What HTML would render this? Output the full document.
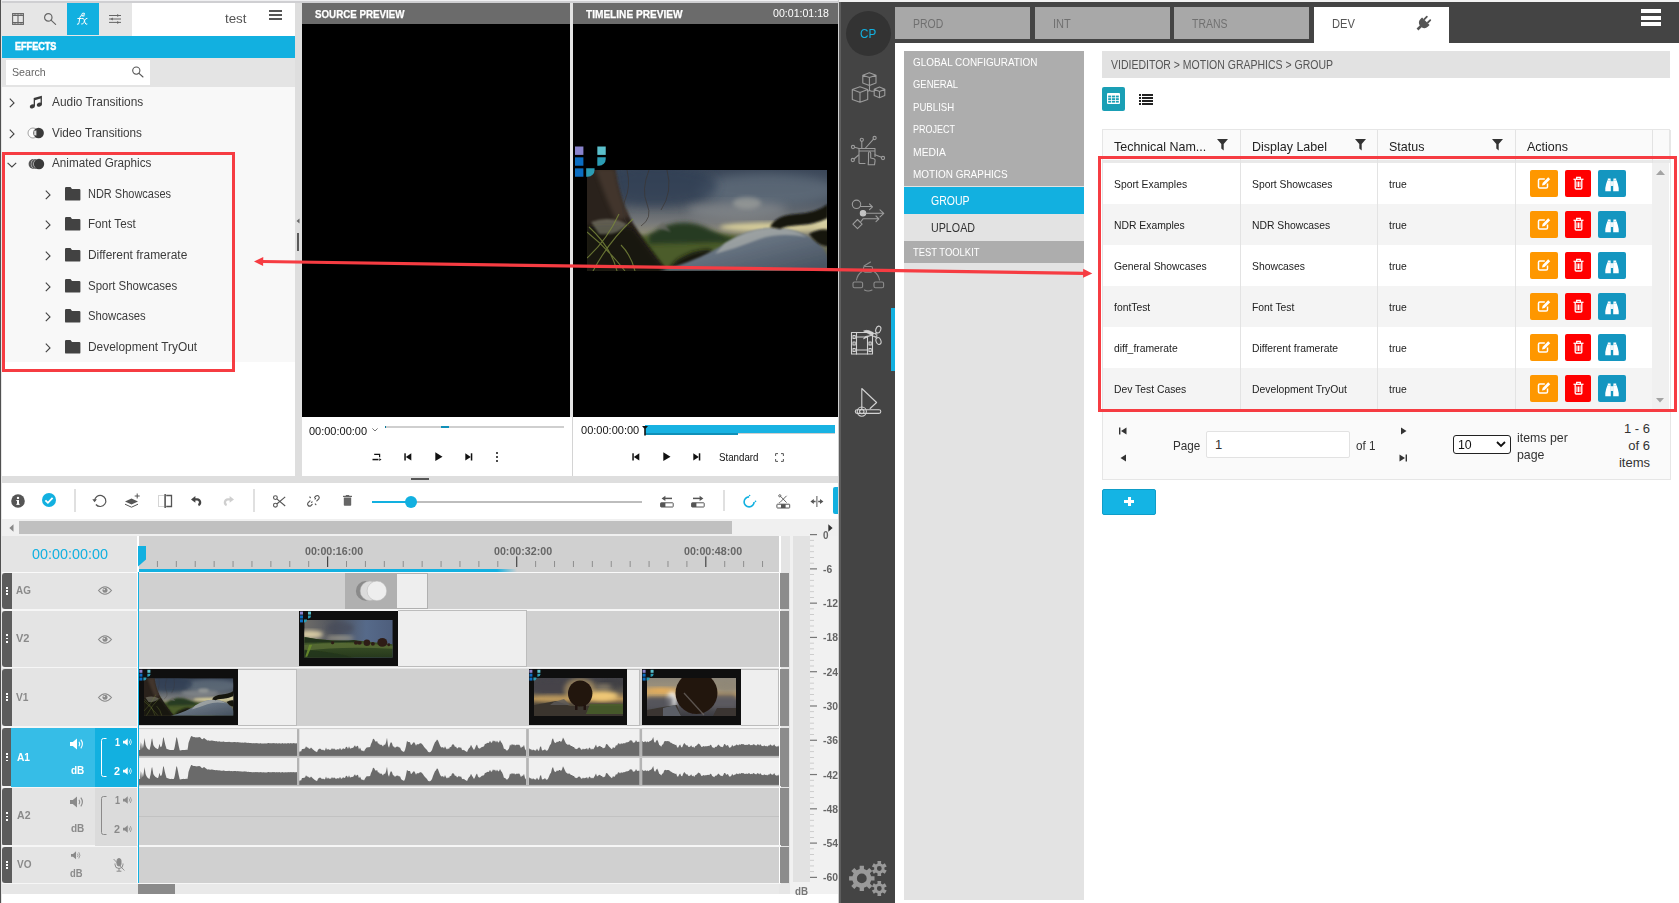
<!DOCTYPE html>
<html><head><meta charset="utf-8"><title>ui</title>
<style>
html,body{margin:0;padding:0;}
body{width:1679px;height:903px;overflow:hidden;background:#fff;position:relative;font-family:"Liberation Sans",sans-serif;}
body>div,body>svg{position:absolute;box-sizing:border-box;}
body>svg{overflow:visible;}
</style></head><body>
<div style="left:0px;top:0px;width:839px;height:476px;background:#dedede;"></div>
<div style="left:0px;top:0px;width:1.2px;height:903px;background:#505050;"></div>
<div style="left:1.2px;top:0px;width:0.8px;height:903px;background:#e6e6e6;"></div>
<div style="left:2px;top:0px;width:837px;height:3px;background:#cfcfd2;"></div>
<div style="left:2px;top:0px;width:837px;height:1.3px;background:#f0f0f2;"></div>
<div style="left:2px;top:3px;width:293px;height:473px;background:#ffffff;"></div>
<div style="left:2px;top:3px;width:130px;height:33px;background:#e6e6e6;"></div>
<div style="left:67px;top:3px;width:32px;height:32px;background:#12b0e0;"></div>
<div style="left:2px;top:36px;width:293px;height:22px;background:#12b0e0;"></div>
<div style="left:14.7px;top:36px;font-size:10px;color:#fff;line-height:22px;height:22px;white-space:nowrap;transform:scaleX(0.9087);transform-origin:0 0;font-weight:bold;-webkit-text-stroke:0.5px #fff;">EFFECTS</div>
<div style="left:2px;top:58px;width:293px;height:29px;background:#e4e4e4;"></div>
<div style="left:6px;top:60px;width:144px;height:25px;background:#fff;"></div>
<div style="left:12.2px;top:60px;font-size:10.5px;color:#666;line-height:25px;height:25px;white-space:nowrap;transform:scaleX(1.0159);transform-origin:0 0;">Search</div>
<div style="left:2px;top:87px;width:293px;height:275px;background:#f8f8f8;"></div>
<div style="left:225px;top:8px;font-size:13px;color:#555;line-height:22px;height:22px;white-space:nowrap;transform:scaleX(1.0261);transform-origin:0 0;">test</div>
<div style="left:269.2px;top:10.1px;width:12.8px;height:2.2px;background:#555;"></div>
<div style="left:269.2px;top:14px;width:12.8px;height:2.2px;background:#555;"></div>
<div style="left:269.2px;top:17.9px;width:12.8px;height:2.2px;background:#555;"></div>
<svg style="left:12px;top:13px;" width="12" height="12" viewBox="0 0 12 12"><g fill="none" stroke="#666" stroke-width="1.1"><rect x=".6" y=".6" width="10.8" height="10.8"/><path d="M.6 2.4h10.8M.6 9.600h10.8M6 2.400v7.200" /><path d="M3 .6v1.800M6 .6v1.800M9 .6v1.800M3 9.600v1.800M6 9.600v1.800M9 9.600v1.800" stroke-width=".8"/></g></svg>
<svg style="left:43px;top:12px;" width="14" height="14" viewBox="0 0 14 14"><g fill="none" stroke="#666" stroke-width="1.2"><circle cx="5.300" cy="5.400" r="3.700"/><path d="M8 8.100l4.600 4.300" stroke-linecap="round"/></g></svg>
<svg style="left:76px;top:12px;" width="14" height="14" viewBox="0 0 14 14"><g fill="none" stroke="#fff" stroke-width="1" stroke-linecap="round"><path d="M1.300 12.300q1.400.6 1.700-1.500l.8-5.200q.4-2.400 2.300-2.100"/><path d="M1.800 6.500h3.600"/><path d="M6.300 6.300q1.300-.5 1.900 1.600l.9 3q.6 2 1.900 1.300"/><path d="M11 6.300q-1.300-.2-2.200 1.800l-1.100 2.600q-.8 1.800-2.100 1.400"/><path d="M5.500 2.200q1.400-1.800 2.900-.9q.9.800-.5 1.600l-2 .4q.5 1.500 2.400.6"/></g></svg>
<svg style="left:109px;top:14px;" width="12" height="10" viewBox="0 0 12 10"><g stroke="#666" stroke-width="1" fill="#666"><path d="M0 1.500h12M0 5h12M0 8.400h12"/><path d="M8.200 0l2.300 1.500-2.300 1.500zM3.800 3.500L1.500 5l2.300 1.500zM8.200 6.900l2.300 1.500-2.300 1.500z" stroke="none"/></g></svg>
<svg style="left:131px;top:65px;" width="13" height="13" viewBox="0 0 13 13"><g fill="none" stroke="#555" stroke-width="1.100"><circle cx="5.300" cy="5.600" r="3.600"/><path d="M8 8.300l4 3.700" stroke-linecap="round"/></g></svg>
<div style="left:51.7px;top:93px;font-size:12.5px;color:#3c3c3c;line-height:18px;height:18px;white-space:nowrap;transform:scaleX(0.9511);transform-origin:0 0;">Audio Transitions</div>
<div style="left:51.7px;top:124px;font-size:12.5px;color:#3c3c3c;line-height:18px;height:18px;white-space:nowrap;transform:scaleX(0.9408);transform-origin:0 0;">Video Transitions</div>
<div style="left:51.7px;top:154px;font-size:12.5px;color:#3c3c3c;line-height:18px;height:18px;white-space:nowrap;transform:scaleX(0.9351);transform-origin:0 0;">Animated Graphics</div>
<div style="left:87.9px;top:185px;font-size:12.5px;color:#3c3c3c;line-height:18px;height:18px;white-space:nowrap;transform:scaleX(0.8785);transform-origin:0 0;">NDR Showcases</div>
<svg style="left:44.6px;top:189.5px;" width="6" height="10" viewBox="0 0 6 10"><path d="M.8 .6l4.200 4.300-4.200 4.300" fill="none" stroke="#444" stroke-width="1.150"/></svg>
<svg style="left:64.7px;top:187px;" width="16" height="14" viewBox="0 0 16 14"><path d="M0 1.200a1.200 1.200 0 0 1 1.200-1.200h4.300l1.500 1.900h7.200a1.200 1.200 0 0 1 1.200 1.200v9.300a1.200 1.200 0 0 1-1.200 1.200h-13a1.200 1.200 0 0 1-1.200-1.200z" fill="#424242"/></svg>
<div style="left:87.9px;top:215px;font-size:12.5px;color:#3c3c3c;line-height:18px;height:18px;white-space:nowrap;transform:scaleX(0.9319);transform-origin:0 0;">Font Test</div>
<svg style="left:44.6px;top:219.5px;" width="6" height="10" viewBox="0 0 6 10"><path d="M.8 .6l4.200 4.300-4.200 4.300" fill="none" stroke="#444" stroke-width="1.150"/></svg>
<svg style="left:64.7px;top:217px;" width="16" height="14" viewBox="0 0 16 14"><path d="M0 1.200a1.200 1.200 0 0 1 1.200-1.200h4.300l1.500 1.900h7.200a1.200 1.200 0 0 1 1.200 1.200v9.300a1.200 1.200 0 0 1-1.200 1.200h-13a1.200 1.200 0 0 1-1.200-1.200z" fill="#424242"/></svg>
<div style="left:87.9px;top:246px;font-size:12.5px;color:#3c3c3c;line-height:18px;height:18px;white-space:nowrap;transform:scaleX(0.9550);transform-origin:0 0;">Different framerate</div>
<svg style="left:44.6px;top:250.5px;" width="6" height="10" viewBox="0 0 6 10"><path d="M.8 .6l4.200 4.300-4.200 4.300" fill="none" stroke="#444" stroke-width="1.150"/></svg>
<svg style="left:64.7px;top:248px;" width="16" height="14" viewBox="0 0 16 14"><path d="M0 1.200a1.200 1.200 0 0 1 1.200-1.200h4.300l1.500 1.900h7.200a1.200 1.200 0 0 1 1.200 1.200v9.300a1.200 1.200 0 0 1-1.200 1.200h-13a1.200 1.200 0 0 1-1.200-1.200z" fill="#424242"/></svg>
<div style="left:87.9px;top:277px;font-size:12.5px;color:#3c3c3c;line-height:18px;height:18px;white-space:nowrap;transform:scaleX(0.9170);transform-origin:0 0;">Sport Showcases</div>
<svg style="left:44.6px;top:281.5px;" width="6" height="10" viewBox="0 0 6 10"><path d="M.8 .6l4.200 4.300-4.200 4.300" fill="none" stroke="#444" stroke-width="1.150"/></svg>
<svg style="left:64.7px;top:279px;" width="16" height="14" viewBox="0 0 16 14"><path d="M0 1.200a1.200 1.200 0 0 1 1.200-1.200h4.300l1.500 1.900h7.200a1.200 1.200 0 0 1 1.200 1.200v9.300a1.200 1.200 0 0 1-1.200 1.200h-13a1.200 1.200 0 0 1-1.200-1.200z" fill="#424242"/></svg>
<div style="left:87.9px;top:307px;font-size:12.5px;color:#3c3c3c;line-height:18px;height:18px;white-space:nowrap;transform:scaleX(0.9026);transform-origin:0 0;">Showcases</div>
<svg style="left:44.6px;top:311.5px;" width="6" height="10" viewBox="0 0 6 10"><path d="M.8 .6l4.200 4.300-4.200 4.300" fill="none" stroke="#444" stroke-width="1.150"/></svg>
<svg style="left:64.7px;top:309px;" width="16" height="14" viewBox="0 0 16 14"><path d="M0 1.200a1.200 1.200 0 0 1 1.200-1.200h4.300l1.500 1.900h7.200a1.200 1.200 0 0 1 1.200 1.200v9.300a1.200 1.200 0 0 1-1.200 1.200h-13a1.200 1.200 0 0 1-1.200-1.200z" fill="#424242"/></svg>
<div style="left:87.9px;top:338px;font-size:12.5px;color:#3c3c3c;line-height:18px;height:18px;white-space:nowrap;transform:scaleX(0.9517);transform-origin:0 0;">Development TryOut</div>
<svg style="left:44.6px;top:342.5px;" width="6" height="10" viewBox="0 0 6 10"><path d="M.8 .6l4.200 4.300-4.200 4.300" fill="none" stroke="#444" stroke-width="1.150"/></svg>
<svg style="left:64.7px;top:340px;" width="16" height="14" viewBox="0 0 16 14"><path d="M0 1.200a1.200 1.200 0 0 1 1.200-1.200h4.300l1.500 1.900h7.200a1.200 1.200 0 0 1 1.200 1.200v9.300a1.200 1.200 0 0 1-1.200 1.200h-13a1.200 1.200 0 0 1-1.200-1.200z" fill="#424242"/></svg>
<svg style="left:9.2px;top:98px;" width="6" height="10" viewBox="0 0 6 10"><path d="M.8 .6l4.200 4.300-4.200 4.300" fill="none" stroke="#444" stroke-width="1.150"/></svg>
<svg style="left:9.2px;top:129px;" width="6" height="10" viewBox="0 0 6 10"><path d="M.8 .6l4.200 4.300-4.200 4.300" fill="none" stroke="#444" stroke-width="1.150"/></svg>
<svg style="left:7.1px;top:162px;" width="10" height="6" viewBox="0 0 10 6"><path d="M.6 .8l4.300 4.200 4.300-4.200" fill="none" stroke="#444" stroke-width="1.150"/></svg>
<svg style="left:29px;top:95px;" width="14" height="14" viewBox="0 0 14 14"><g fill="#3a3a3a"><ellipse cx="3.300" cy="11.400" rx="2.600" ry="2" transform="rotate(-20 3.3 11.4)"/><ellipse cx="10.300" cy="9.600" rx="2.600" ry="2" transform="rotate(-20 10.3 9.6)"/><path d="M4.700 11.300V3l8.200-2.300v9h-1.300V3.600l-5.600 1.600v6.100z"/></g></svg>
<svg style="left:27px;top:127px;" width="18" height="12" viewBox="0 0 18 12"><circle cx="6" cy="6" r="5" fill="#fff" stroke="#999" stroke-width=".9"/><circle cx="11.600" cy="6" r="5.300" fill="#3a3a3a"/><rect x="7" y="3.600" width="2.400" height="4.800" fill="#ddd" stroke="#777" stroke-width=".5"/></svg>
<svg style="left:28px;top:158px;" width="17" height="12" viewBox="0 0 17 12"><circle cx="5.600" cy="6" r="5" fill="#555"/><circle cx="7.800" cy="6" r="5" fill="#f8f8f8"/><circle cx="8.200" cy="6" r="5" fill="#555"/><circle cx="10.400" cy="6" r="5" fill="#f8f8f8"/><circle cx="11" cy="6" r="5.200" fill="#3a3a3a"/></svg>
<div style="left:302px;top:3px;width:268px;height:21px;background:#6b6b6b;"></div>
<div style="left:314.5px;top:3.7px;font-size:10.5px;color:#fff;line-height:21px;height:21px;white-space:nowrap;transform:scaleX(0.9297);transform-origin:0 0;font-weight:bold;-webkit-text-stroke:0.25px #fff;">SOURCE PREVIEW</div>
<div style="left:302px;top:24px;width:268px;height:393px;background:#000;"></div>
<div style="left:302px;top:417px;width:268px;height:59px;background:#fff;"></div>
<div style="left:573px;top:3px;width:265px;height:21px;background:#6b6b6b;"></div>
<div style="left:585.5px;top:3.7px;font-size:10.5px;color:#fff;line-height:21px;height:21px;white-space:nowrap;transform:scaleX(0.9617);transform-origin:0 0;font-weight:bold;-webkit-text-stroke:0.25px #fff;">TIMELINE PREVIEW</div>
<div style="left:573px;top:24px;width:265px;height:393px;background:#000;"></div>
<div style="left:573px;top:417px;width:265px;height:59px;background:#fff;"></div>
<div style="left:772.5px;top:3px;font-size:11px;color:#fff;line-height:20px;height:20px;white-space:nowrap;transform:scaleX(0.9637);transform-origin:0 0;">00:01:01:18</div>
<div style="left:309.3px;top:422px;font-size:11.5px;color:#111;line-height:18px;height:18px;white-space:nowrap;transform:scaleX(0.9547);transform-origin:0 0;">00:00:00:00</div>
<div style="left:581px;top:421px;font-size:11.5px;color:#111;line-height:18px;height:18px;white-space:nowrap;transform:scaleX(0.9580);transform-origin:0 0;">00:00:00:00</div>
<div style="left:718.5px;top:450px;font-size:10px;color:#111;line-height:16px;height:16px;white-space:nowrap;transform:scaleX(0.9732);transform-origin:0 0;">Standard</div>
<div style="left:2px;top:476px;width:837px;height:7px;background:#dedede;"></div>
<div style="left:2px;top:483px;width:837px;height:36px;background:#fff;"></div>
<div style="left:2px;top:519px;width:837px;height:17px;background:#f0f0f0;"></div>
<div style="left:19px;top:521px;width:713px;height:13px;background:#c0c0c0;"></div>
<svg style="left:8.5px;top:523.5px;" width="5" height="8" viewBox="0 0 5 8"><path d="M4.500 .3v7.400L.3 4z" fill="#888"/></svg>
<svg style="left:828px;top:523.8px;" width="5" height="8" viewBox="0 0 5 8"><path d="M.3 .2v7.600l4.300-3.800z" fill="#333"/></svg>
<div style="left:2px;top:536px;width:837px;height:358px;background:#e4e4e4;"></div>
<div style="left:790px;top:536px;width:49px;height:358px;background:#f1f1f1;"></div>
<div style="left:137px;top:536px;width:2px;height:347px;background:#fff;"></div>
<div style="left:139px;top:536px;width:640px;height:36px;background:#d0d0d0;"></div>
<div style="left:779px;top:536px;width:2px;height:347px;background:#fff;"></div>
<div style="left:31.5px;top:543.5px;font-size:14.5px;color:#12b0e0;line-height:20px;height:20px;white-space:nowrap;transform:scaleX(0.9922);transform-origin:0 0;">00:00:00:00</div>
<svg style="left:0px;top:0px;" width="1679" height="903" viewBox="0 0 1679 903"><rect x="156.91" y="561" width="1" height="6" fill="#8e8e8e"/><rect x="175.82" y="561" width="1" height="6" fill="#8e8e8e"/><rect x="194.73" y="561" width="1" height="6" fill="#8e8e8e"/><rect x="213.64" y="561" width="1" height="6" fill="#8e8e8e"/><rect x="232.55" y="561" width="1" height="6" fill="#8e8e8e"/><rect x="251.46" y="561" width="1" height="6" fill="#8e8e8e"/><rect x="270.37" y="561" width="1" height="6" fill="#8e8e8e"/><rect x="289.28" y="561" width="1" height="6" fill="#8e8e8e"/><rect x="308.19" y="561" width="1" height="6" fill="#8e8e8e"/><rect x="327.00" y="556.4" width="1.2" height="10.6" fill="#444"/><rect x="346.01" y="561" width="1" height="6" fill="#8e8e8e"/><rect x="364.92" y="561" width="1" height="6" fill="#8e8e8e"/><rect x="383.83" y="561" width="1" height="6" fill="#8e8e8e"/><rect x="402.74" y="561" width="1" height="6" fill="#8e8e8e"/><rect x="421.65" y="561" width="1" height="6" fill="#8e8e8e"/><rect x="440.56" y="561" width="1" height="6" fill="#8e8e8e"/><rect x="459.47" y="561" width="1" height="6" fill="#8e8e8e"/><rect x="478.38" y="561" width="1" height="6" fill="#8e8e8e"/><rect x="497.29" y="561" width="1" height="6" fill="#8e8e8e"/><rect x="516.10" y="556.4" width="1.2" height="10.6" fill="#444"/><rect x="535.11" y="561" width="1" height="6" fill="#8e8e8e"/><rect x="554.02" y="561" width="1" height="6" fill="#8e8e8e"/><rect x="572.93" y="561" width="1" height="6" fill="#8e8e8e"/><rect x="591.84" y="561" width="1" height="6" fill="#8e8e8e"/><rect x="610.75" y="561" width="1" height="6" fill="#8e8e8e"/><rect x="629.66" y="561" width="1" height="6" fill="#8e8e8e"/><rect x="648.57" y="561" width="1" height="6" fill="#8e8e8e"/><rect x="667.48" y="561" width="1" height="6" fill="#8e8e8e"/><rect x="686.39" y="561" width="1" height="6" fill="#8e8e8e"/><rect x="705.20" y="556.4" width="1.2" height="10.6" fill="#444"/><rect x="724.21" y="561" width="1" height="6" fill="#8e8e8e"/><rect x="743.12" y="561" width="1" height="6" fill="#8e8e8e"/><rect x="762.03" y="561" width="1" height="6" fill="#8e8e8e"/></svg>
<div style="left:305.3px;top:543.5px;font-size:10.5px;color:#666;line-height:14px;height:14px;white-space:nowrap;transform:scaleX(1.0156);transform-origin:0 0;font-weight:bold;">00:00:16:00</div>
<div style="left:494.40000000000003px;top:543.5px;font-size:10.5px;color:#666;line-height:14px;height:14px;white-space:nowrap;transform:scaleX(1.0156);transform-origin:0 0;font-weight:bold;">00:00:32:00</div>
<div style="left:683.5px;top:543.5px;font-size:10.5px;color:#666;line-height:14px;height:14px;white-space:nowrap;transform:scaleX(1.0156);transform-origin:0 0;font-weight:bold;">00:00:48:00</div>
<div style="left:139px;top:568.9px;width:358px;height:3px;background:#12b0e0;"></div>
<div style="left:497px;top:568.9px;width:20px;height:3px;background:linear-gradient(90deg,#12b0e0,rgba(18,176,224,0));"></div>
<svg style="left:138px;top:546px;" width="9" height="21" viewBox="0 0 9 21"><path d="M0 0h8v13.500L0 20.500z" fill="#12b0e0"/></svg>
<div style="left:139px;top:573px;width:640px;height:36px;background:#d0d0d0;"></div>
<div style="left:2px;top:573px;width:9.5px;height:36px;background:#5c5c5c;border-radius:3px 0 0 3px;"></div>
<div style="left:780.3px;top:573px;width:8.6px;height:36px;background:#8c8c8c;"></div>
<div style="left:5.6px;top:586.9px;width:2px;height:1.8px;background:#fff;"></div>
<div style="left:5.6px;top:590.1px;width:2px;height:1.8px;background:#fff;"></div>
<div style="left:5.6px;top:593.3000000000001px;width:2px;height:1.8px;background:#fff;"></div>
<div style="left:139px;top:610.5px;width:640px;height:56px;background:#d0d0d0;"></div>
<div style="left:2px;top:610.5px;width:9.5px;height:56px;background:#5c5c5c;border-radius:3px 0 0 3px;"></div>
<div style="left:780.3px;top:610.5px;width:8.6px;height:56px;background:#8c8c8c;"></div>
<div style="left:5.6px;top:634.4px;width:2px;height:1.8px;background:#fff;"></div>
<div style="left:5.6px;top:637.6px;width:2px;height:1.8px;background:#fff;"></div>
<div style="left:5.6px;top:640.8000000000001px;width:2px;height:1.8px;background:#fff;"></div>
<div style="left:139px;top:668.5px;width:640px;height:57px;background:#d0d0d0;"></div>
<div style="left:2px;top:668.5px;width:9.5px;height:57px;background:#5c5c5c;border-radius:3px 0 0 3px;"></div>
<div style="left:780.3px;top:668.5px;width:8.6px;height:57px;background:#8c8c8c;"></div>
<div style="left:5.6px;top:692.9px;width:2px;height:1.8px;background:#fff;"></div>
<div style="left:5.6px;top:696.1px;width:2px;height:1.8px;background:#fff;"></div>
<div style="left:5.6px;top:699.3000000000001px;width:2px;height:1.8px;background:#fff;"></div>
<div style="left:139px;top:728px;width:640px;height:58.5px;background:#d0d0d0;"></div>
<div style="left:2px;top:728px;width:9.5px;height:58.5px;background:#5c5c5c;border-radius:3px 0 0 3px;"></div>
<div style="left:780.3px;top:728px;width:8.6px;height:58.5px;background:#8c8c8c;"></div>
<div style="left:5.6px;top:753.15px;width:2px;height:1.8px;background:#fff;"></div>
<div style="left:5.6px;top:756.35px;width:2px;height:1.8px;background:#fff;"></div>
<div style="left:5.6px;top:759.5500000000001px;width:2px;height:1.8px;background:#fff;"></div>
<div style="left:139px;top:787.5px;width:640px;height:58px;background:#d0d0d0;"></div>
<div style="left:2px;top:787.5px;width:9.5px;height:58px;background:#5c5c5c;border-radius:3px 0 0 3px;"></div>
<div style="left:780.3px;top:787.5px;width:8.6px;height:58px;background:#8c8c8c;"></div>
<div style="left:5.6px;top:812.4px;width:2px;height:1.8px;background:#fff;"></div>
<div style="left:5.6px;top:815.6px;width:2px;height:1.8px;background:#fff;"></div>
<div style="left:5.6px;top:818.8000000000001px;width:2px;height:1.8px;background:#fff;"></div>
<div style="left:139px;top:847px;width:640px;height:36px;background:#d0d0d0;"></div>
<div style="left:2px;top:847px;width:9.5px;height:36px;background:#5c5c5c;border-radius:3px 0 0 3px;"></div>
<div style="left:780.3px;top:847px;width:8.6px;height:36px;background:#8c8c8c;"></div>
<div style="left:5.6px;top:860.9px;width:2px;height:1.8px;background:#fff;"></div>
<div style="left:5.6px;top:864.1px;width:2px;height:1.8px;background:#fff;"></div>
<div style="left:5.6px;top:867.3000000000001px;width:2px;height:1.8px;background:#fff;"></div>
<div style="left:2px;top:609px;width:779px;height:1.5px;background:#f6f6f6;"></div>
<div style="left:2px;top:666.8px;width:779px;height:1.7px;background:#f6f6f6;"></div>
<div style="left:2px;top:725.7px;width:779px;height:2.3px;background:#f6f6f6;"></div>
<div style="left:2px;top:786.3px;width:779px;height:1.4px;background:#f6f6f6;"></div>
<div style="left:2px;top:845.4px;width:779px;height:1.8px;background:#f6f6f6;"></div>
<div style="left:2px;top:883px;width:779px;height:1px;background:#f6f6f6;"></div>
<div style="left:2px;top:571.9px;width:779px;height:1.4px;background:#fafafa;"></div>
<div style="left:138.3px;top:572px;width:1.2px;height:311px;background:#12b0e0;"></div>
<div style="left:16.2px;top:581px;font-size:11.5px;color:#8a8a8a;line-height:18px;height:18px;white-space:nowrap;transform:scaleX(0.8580);transform-origin:0 0;font-weight:bold;">AG</div>
<svg style="left:98.3px;top:586.3px;" width="14" height="9" viewBox="0 0 14 9"><path d="M.5 4.500q6.500-7.400 13 0q-6.500 7.400-13 0z" fill="none" stroke="#8a8a8a" stroke-width="1.100"/><circle cx="7" cy="4.300" r="2.500" fill="#8a8a8a"/><circle cx="6.200" cy="3.500" r=".8" fill="#e4e4e4"/></svg>
<div style="left:16.2px;top:629px;font-size:11.5px;color:#8a8a8a;line-height:18px;height:18px;white-space:nowrap;transform:scaleX(0.9597);transform-origin:0 0;font-weight:bold;">V2</div>
<svg style="left:98.3px;top:634.5px;" width="14" height="9" viewBox="0 0 14 9"><path d="M.5 4.500q6.500-7.400 13 0q-6.500 7.400-13 0z" fill="none" stroke="#8a8a8a" stroke-width="1.100"/><circle cx="7" cy="4.300" r="2.500" fill="#8a8a8a"/><circle cx="6.200" cy="3.500" r=".8" fill="#e4e4e4"/></svg>
<div style="left:16.2px;top:687.5px;font-size:11.5px;color:#8a8a8a;line-height:18px;height:18px;white-space:nowrap;transform:scaleX(0.8886);transform-origin:0 0;font-weight:bold;">V1</div>
<svg style="left:98.3px;top:692.5px;" width="14" height="9" viewBox="0 0 14 9"><path d="M.5 4.500q6.500-7.400 13 0q-6.500 7.400-13 0z" fill="none" stroke="#8a8a8a" stroke-width="1.100"/><circle cx="7" cy="4.300" r="2.500" fill="#8a8a8a"/><circle cx="6.200" cy="3.500" r=".8" fill="#e4e4e4"/></svg>
<div style="left:11px;top:728px;width:84px;height:58.5px;background:#36bde7;"></div>
<div style="left:95px;top:728px;width:42px;height:58.5px;background:#12b0e0;"></div>
<div style="left:16.5px;top:747.5px;font-size:11.5px;color:#fff;line-height:18px;height:18px;white-space:nowrap;transform:scaleX(0.8843);transform-origin:0 0;font-weight:bold;">A1</div>
<svg style="left:69.5px;top:738px;" width="15" height="12" viewBox="0 0 15 12"><path d="M0 4h2.800L7 .5v11L2.800 8H0z" fill="#fff"/><path d="M9 3.700q1.600 2.300 0 4.600" fill="none" stroke="#fff" stroke-width="1.100"/><path d="M10.800 1.700q3.200 4.300 0 8.600" fill="none" stroke="#fff" stroke-width="1.100"/></svg>
<div style="left:70.5px;top:761.5px;font-size:11px;color:#fff;line-height:16px;height:16px;white-space:nowrap;transform:scaleX(0.9070);transform-origin:0 0;font-weight:bold;">dB</div>
<svg style="left:101px;top:737.5px;" width="6" height="39" viewBox="0 0 6 39"><path d="M5.500 .5h-3a2 2 0 0 0-2 2v34a2 2 0 0 0 2 2h3" fill="none" stroke="#fff" stroke-width="1"/></svg>
<div style="left:114.5px;top:733.5px;font-size:11.5px;color:#fff;line-height:16px;height:16px;white-space:nowrap;transform:scaleX(0.7817);transform-origin:0 0;font-weight:bold;">1</div>
<svg style="left:123px;top:737.5px;" width="10.200000000000001" height="8.16" viewBox="0 0 15 12"><path d="M0 4h2.800L7 .5v11L2.800 8H0z" fill="#fff"/><path d="M9 3.700q1.600 2.300 0 4.600" fill="none" stroke="#fff" stroke-width="1.100"/><path d="M10.800 1.700q3.200 4.300 0 8.600" fill="none" stroke="#fff" stroke-width="1.100"/></svg>
<div style="left:113.8px;top:762.5px;font-size:11.5px;color:#fff;line-height:16px;height:16px;white-space:nowrap;transform:scaleX(0.9381);transform-origin:0 0;font-weight:bold;">2</div>
<svg style="left:123px;top:766.5px;" width="10.200000000000001" height="8.16" viewBox="0 0 15 12"><path d="M0 4h2.800L7 .5v11L2.800 8H0z" fill="#fff"/><path d="M9 3.700q1.600 2.300 0 4.600" fill="none" stroke="#fff" stroke-width="1.100"/><path d="M10.800 1.700q3.200 4.300 0 8.600" fill="none" stroke="#fff" stroke-width="1.100"/></svg>
<div style="left:95px;top:787.5px;width:42px;height:58px;background:#dbdbdb;"></div>
<div style="left:16.5px;top:805.5px;font-size:11.5px;color:#8a8a8a;line-height:18px;height:18px;white-space:nowrap;transform:scaleX(0.9183);transform-origin:0 0;font-weight:bold;">A2</div>
<svg style="left:69.5px;top:796px;" width="15" height="12" viewBox="0 0 15 12"><path d="M0 4h2.800L7 .5v11L2.800 8H0z" fill="#8a8a8a"/><path d="M9 3.700q1.600 2.300 0 4.600" fill="none" stroke="#8a8a8a" stroke-width="1.100"/><path d="M10.800 1.700q3.200 4.300 0 8.600" fill="none" stroke="#8a8a8a" stroke-width="1.100"/></svg>
<div style="left:70.5px;top:820px;font-size:11px;color:#8a8a8a;line-height:16px;height:16px;white-space:nowrap;transform:scaleX(0.9070);transform-origin:0 0;font-weight:bold;">dB</div>
<svg style="left:101px;top:796px;" width="6" height="39" viewBox="0 0 6 39"><path d="M5.500 .5h-3a2 2 0 0 0-2 2v34a2 2 0 0 0 2 2h3" fill="none" stroke="#8a8a8a" stroke-width="1"/></svg>
<div style="left:114.5px;top:792px;font-size:11.5px;color:#8a8a8a;line-height:16px;height:16px;white-space:nowrap;transform:scaleX(0.7817);transform-origin:0 0;font-weight:bold;">1</div>
<svg style="left:123px;top:796px;" width="10.200000000000001" height="8.16" viewBox="0 0 15 12"><path d="M0 4h2.800L7 .5v11L2.800 8H0z" fill="#8a8a8a"/><path d="M9 3.700q1.600 2.300 0 4.600" fill="none" stroke="#8a8a8a" stroke-width="1.100"/><path d="M10.800 1.700q3.200 4.300 0 8.600" fill="none" stroke="#8a8a8a" stroke-width="1.100"/></svg>
<div style="left:113.8px;top:821px;font-size:11.5px;color:#8a8a8a;line-height:16px;height:16px;white-space:nowrap;transform:scaleX(0.9381);transform-origin:0 0;font-weight:bold;">2</div>
<svg style="left:123px;top:825px;" width="10.200000000000001" height="8.16" viewBox="0 0 15 12"><path d="M0 4h2.800L7 .5v11L2.800 8H0z" fill="#8a8a8a"/><path d="M9 3.700q1.600 2.300 0 4.600" fill="none" stroke="#8a8a8a" stroke-width="1.100"/><path d="M10.800 1.700q3.200 4.300 0 8.600" fill="none" stroke="#8a8a8a" stroke-width="1.100"/></svg>
<div style="left:139px;top:816px;width:640px;height:1px;background:#c2c2c2;"></div>
<div style="left:16.5px;top:854.5px;font-size:11.5px;color:#8a8a8a;line-height:18px;height:18px;white-space:nowrap;transform:scaleX(0.8727);transform-origin:0 0;font-weight:bold;">VO</div>
<svg style="left:70.8px;top:851.3px;" width="10.799999999999999" height="8.64" viewBox="0 0 15 12"><path d="M0 4h2.800L7 .5v11L2.800 8H0z" fill="#8a8a8a"/><path d="M9 3.700q1.600 2.300 0 4.600" fill="none" stroke="#8a8a8a" stroke-width="1.100"/><path d="M10.800 1.700q3.200 4.300 0 8.600" fill="none" stroke="#8a8a8a" stroke-width="1.100"/></svg>
<div style="left:70px;top:865px;font-size:11px;color:#8a8a8a;line-height:16px;height:16px;white-space:nowrap;transform:scaleX(0.8525);transform-origin:0 0;font-weight:bold;">dB</div>
<svg style="left:113px;top:858px;" width="12" height="14" viewBox="0 0 12 14"><g fill="none" stroke="#8a8a8a" stroke-width="1"><rect x="4" y=".6" width="4" height="7.400" rx="2" fill="#8a8a8a"/><path d="M2 5.500v1a4 4 0 0 0 8 0v-1M6 10.600v2.400M3.600 13.200h4.800"/><path d="M.6 1l10.800 11.500" stroke-width=".9"/></g></svg>
<div style="left:345.2px;top:573.4px;width:51.6px;height:35.2px;background:#b0b0b0;"></div>
<div style="left:396.8px;top:573.4px;width:31.2px;height:35.2px;background:#eeeeee;border:1px solid #b0b0b0;border-left:none;"></div>
<svg style="left:355px;top:580px;" width="34" height="22" viewBox="0 0 34 22"><circle cx="10.700" cy="10.900" r="9.800" fill="#8a8a8a"/><circle cx="15" cy="10.900" r="9.800" fill="#dcdcdc" stroke="#b4b4b4" stroke-width=".5"/><circle cx="21.900" cy="10.900" r="9.800" fill="#eeeeee" stroke="#b8b8b8" stroke-width=".5"/></svg>
<div style="left:299.3px;top:611px;width:98.6px;height:54.8px;background:#0f0f0f;"></div>
<div style="left:398px;top:610.4px;width:128.5px;height:56.3px;background:#eeeeee;border:1px solid #bcbcbc;border-left:none;"></div>
<div style="left:138.8px;top:669.2px;width:99.4px;height:56px;background:#0f0f0f;"></div>
<div style="left:238.2px;top:668.6px;width:59px;height:57px;background:#eeeeee;border:1px solid #bcbcbc;border-left:none;"></div>
<div style="left:528.8px;top:669.2px;width:98.6px;height:56px;background:#0f0f0f;"></div>
<div style="left:627.4px;top:668.6px;width:12.3px;height:57px;background:#eeeeee;border:1px solid #bcbcbc;border-left:none;"></div>
<div style="left:642px;top:669.2px;width:99px;height:56px;background:#0f0f0f;"></div>
<div style="left:741px;top:668.6px;width:38px;height:57px;background:#eeeeee;border:1px solid #bcbcbc;border-left:none;"></div>
<svg style="left:0px;top:0px;" width="0" height="0" viewBox="0 0 0 0"><defs><filter id="tb" x="-10%" y="-10%" width="120%" height="120%"><feGaussianBlur stdDeviation=".7"/></filter>
<filter id="tb2" x="-20%" y="-20%" width="140%" height="140%"><feGaussianBlur stdDeviation="2.2"/></filter>
<linearGradient id="sk2" x1="0" y1="0" x2="1" y2="0"><stop offset="0" stop-color="#6e6c68"/><stop offset=".35" stop-color="#50545e"/><stop offset=".7" stop-color="#566a8a"/><stop offset="1" stop-color="#4e5e7c"/></linearGradient>
<linearGradient id="gr2" x1="0" y1="0" x2="0" y2="1"><stop offset="0" stop-color="#4c6230"/><stop offset=".35" stop-color="#3a5026"/><stop offset="1" stop-color="#26381c"/></linearGradient>
<linearGradient id="sk3" x1="0" y1="0" x2="0" y2="1"><stop offset="0" stop-color="#45444a"/><stop offset=".35" stop-color="#5a5650"/><stop offset=".55" stop-color="#b89458"/><stop offset=".68" stop-color="#5a5040"/><stop offset="1" stop-color="#2a2a22"/></linearGradient>
<linearGradient id="sk4" x1="0" y1="0" x2="0" y2="1"><stop offset="0" stop-color="#8c867a"/><stop offset=".3" stop-color="#a0947c"/><stop offset=".45" stop-color="#c8a468"/><stop offset=".6" stop-color="#5c5a5e"/><stop offset="1" stop-color="#3c3c42"/></linearGradient>
<clipPath id="tc"><rect width="89" height="38"/></clipPath></defs></svg>
<svg style="left:304px;top:620px;" width="89" height="36.8" viewBox="0 0 89 37"><g clip-path="url(#tc)"><rect width="89" height="38" fill="url(#sk2)"/><ellipse cx="36" cy="8" rx="14" ry="6" fill="#444a58" opacity=".6" filter="url(#tb2)"/><ellipse cx="6" cy="14.500" rx="13" ry="4" fill="#e6d8ac" opacity=".9" filter="url(#tb2)"/><ellipse cx="36" cy="18" rx="14" ry="2.500" fill="#b4ae98" opacity=".7" filter="url(#tb2)"/><path d="M0 17q14 3 28 3.500t26 0l35 4V38H0z" fill="url(#gr2)"/><path d="M0 17q14 3 28 3.500t22-.5l10 2-60 1z" fill="#22331a" filter="url(#tb)"/><path d="M0 25q40-4 89 1v3q-50-3-89 2z" fill="#66783c" opacity=".6" filter="url(#tb)"/><path d="M0 30q30 2 50 8H0z" fill="#22361a" opacity=".8" filter="url(#tb)"/><g fill="#2e1c18" filter="url(#tb)"><circle cx="28.500" cy="22.800" r="1.600"/><ellipse cx="52" cy="22.800" rx="2" ry="2"/><ellipse cx="55.500" cy="23" rx="2.300" ry="2"/><circle cx="63" cy="22.800" r="3.300"/><circle cx="69" cy="24" r="2"/><ellipse cx="78.500" cy="22.500" rx="5" ry="4.300"/><circle cx="85" cy="24.800" r="1.500"/></g><path d="M5 25l3 0-5 12h-2z" fill="#6a8c2c" opacity=".9"/></g></svg>
<svg style="left:143.8px;top:677.8px;" width="89.3" height="38" viewBox="0 0 240 101"><defs>
<filter id="b1" x="-20%" y="-20%" width="140%" height="140%"><feGaussianBlur stdDeviation="2.2"/></filter>
<filter id="b2" x="-20%" y="-20%" width="140%" height="140%"><feGaussianBlur stdDeviation="1"/></filter>
<filter id="b3" x="-20%" y="-20%" width="140%" height="140%"><feGaussianBlur stdDeviation="5"/></filter>
<linearGradient id="sky" x1="0" y1="0" x2="0" y2="1"><stop offset="0" stop-color="#3b4759"/><stop offset=".3" stop-color="#4c5663"/><stop offset=".52" stop-color="#77797a"/><stop offset=".62" stop-color="#8d8a78"/><stop offset="1" stop-color="#3a4226"/></linearGradient>
<linearGradient id="rock" x1="0" y1="0" x2="1" y2="1"><stop offset="0" stop-color="#90969c"/><stop offset=".45" stop-color="#667280"/><stop offset="1" stop-color="#44505e"/></linearGradient>
<clipPath id="cp1"><rect x="0" y="0" width="240" height="101"/></clipPath>
</defs><g clip-path="url(#cp1)"><rect width="240" height="101" fill="url(#sky)"/>
<ellipse cx="180" cy="20" rx="70" ry="16" fill="#6b7886" opacity=".55" filter="url(#b3)"/>
<ellipse cx="70" cy="16" rx="60" ry="20" fill="#2f3c52" opacity=".7" filter="url(#b3)"/>
<ellipse cx="150" cy="40" rx="50" ry="9" fill="#8e9294" opacity=".6" filter="url(#b3)"/>
<ellipse cx="160" cy="33" rx="14" ry="6" fill="#a4a6a0" opacity=".6" filter="url(#b1)"/>
<ellipse cx="195" cy="57" rx="62" ry="5" fill="#dcd29c" opacity=".9" filter="url(#b1)"/>
<ellipse cx="236" cy="50" rx="12" ry="6" fill="#ece4ae" opacity=".8" filter="url(#b1)"/>
<path d="M50 101V66q20-2 40-3q30-1 70 4l30 34z" fill="#4c5c2c" filter="url(#b1)"/>
<path d="M62 65q30-22 62-5q14 7 28 12l-90 2z" fill="#283a20" filter="url(#b1)"/>
<path d="M70 58l6-6 8 10z" fill="#6a6a66" opacity=".7" filter="url(#b2)"/>
<path d="M90 90q20-12 34-10l10 21H80z" fill="#141810" filter="url(#b1)"/>
<path d="M-2 -2h30q4 28 14 48q14 26 40 57H-2z" fill="#2a221b" filter="url(#b2)"/>
<path d="M8 -2h20q4 28 14 48l-12 6q-10-20-22-54z" fill="#5a4a3c" opacity=".5" filter="url(#b1)"/>
<path d="M-2 58q20-6 48 0q16 20 34 45H-2z" fill="#15190f" opacity=".85" filter="url(#b1)"/>
<path d="M4 52q18-7 36 2q-8 12-28 10z" fill="#9a9a88" opacity=".5" filter="url(#b2)"/>
<g stroke="#7a8a3c" stroke-width="1.100" fill="none" opacity=".8"><path d="M0 88q20-18 32-44M6 101q16-30 40-52M0 62q20 16 38 39M30 101q-6-24-28-44M48 101q-4-16-14-26"/></g>
<g stroke="#3a3430" stroke-width=".8" fill="none" opacity=".8"><path d="M40 0q4 16-2 30t4 26M62 0q-8 20-2 34t-6 22M80 0q6 22-6 40"/></g>
<path d="M72 101q40-10 70-30q22-14 48-13q30 2 46 20q6 8 8 23z" fill="url(#rock)" filter="url(#b2)"/>
<path d="M138 73q24-15 52-15q18 1 30 9q-30-5-50 3t-42 14z" fill="#b8bab4" opacity=".6" filter="url(#b2)"/>
<path d="M183 57q6-12 26-13t32-10v14q-12 6-28 7t-20 4z" fill="#15150f" filter="url(#b2)"/>
<path d="M222 64q10-6 20-4v16q-10 2-20-12z" fill="#15150f" filter="url(#b2)"/>
</g></svg>
<svg style="left:534px;top:677.8px;" width="89" height="37.6" viewBox="0 0 89 37.6"><g clip-path="url(#tc)"><rect width="89" height="38" fill="url(#sk3)"/><ellipse cx="18" cy="9" rx="24" ry="9" fill="#444348" opacity=".9" filter="url(#tb2)"/><ellipse cx="78" cy="5" rx="14" ry="5" fill="#3e3e42" opacity=".8" filter="url(#tb2)"/><ellipse cx="70" cy="9" rx="8" ry="3" fill="#a89878" opacity=".6" filter="url(#tb2)"/><ellipse cx="68" cy="18" rx="16" ry="5" fill="#f4cc78" opacity=".95" filter="url(#tb2)"/><ellipse cx="18" cy="20" rx="16" ry="3" fill="#c4a060" opacity=".7" filter="url(#tb2)"/><ellipse cx="46" cy="12" rx="16" ry="12" fill="#e8c070" opacity=".45" filter="url(#tb2)"/><path d="M0 27l22-4 14 5h53v10H0z" fill="#3a362e" filter="url(#tb)"/><path d="M56 26h33v10H52z" fill="#4a5e2a" opacity=".85" filter="url(#tb)"/><path d="M20 24l10-3 6 6H16z" fill="#5c5a5a" opacity=".8" filter="url(#tb)"/><ellipse cx="46.200" cy="15.500" rx="12.200" ry="13" fill="#20130f" filter="url(#tb)"/><path d="M41 27h2.500v5H41zM49.500 27H52v5h-2.500z" fill="#20130f"/></g></svg>
<svg style="left:647px;top:677.8px;" width="89.2" height="37.6" viewBox="0 0 89.2 37.6"><g clip-path="url(#tc)"><rect width="89" height="38" fill="url(#sk4)"/><ellipse cx="14" cy="12.500" rx="18" ry="2.500" fill="#f6b452" opacity=".95" filter="url(#tb2)"/><ellipse cx="25" cy="22" rx="5" ry="8" fill="#fff" opacity=".9" filter="url(#tb2)"/><path d="M0 19h26v12H0z" fill="#54545c" opacity=".8" filter="url(#tb2)"/><ellipse cx="80" cy="8" rx="12" ry="6" fill="#8e8676" opacity=".8" filter="url(#tb2)"/><path d="M64 16h25v14H64z" fill="#5c5a60" opacity=".85" filter="url(#tb2)"/><path d="M0 32l16-3 14-2 4 11H0zM70 30h19v8H66z" fill="#3a3630" filter="url(#tb)"/><path d="M16 30l12-3 6 11H16z" fill="#5e646c" opacity=".9" filter="url(#tb)"/><ellipse cx="49.500" cy="15" rx="21" ry="21" fill="#241611" filter="url(#tb)"/><path d="M37 15l20 22" stroke="#6a6460" stroke-width="1.300" opacity=".8"/></g></svg>
<svg style="left:0px;top:0px;" width="1679" height="903" viewBox="0 0 1679 903"><rect x="300.00" y="611.60" width="3" height="3" fill="#8983cc"/><rect x="307.98" y="611.60" width="3" height="3" fill="#5bbfcb"/><rect x="300.00" y="615.47" width="3" height="3" fill="#0b6dc1"/><path d="M307.98 615.47h3v0.60a2.40 2.40 0 0 1 -2.40 2.40h-0.60z" fill="#2b9cb4"/><rect x="300.00" y="619.40" width="3" height="3" fill="#0b6dc1"/><path d="M303.99 619.40h3v0.60a2.40 2.40 0 0 1 -2.40 2.40h-0.60z" fill="#2b9cb4"/><rect x="139.40" y="669.80" width="3" height="3" fill="#8983cc"/><rect x="147.38" y="669.80" width="3" height="3" fill="#5bbfcb"/><rect x="139.40" y="673.67" width="3" height="3" fill="#0b6dc1"/><path d="M147.38 673.67h3v0.60a2.40 2.40 0 0 1 -2.40 2.40h-0.60z" fill="#2b9cb4"/><rect x="139.40" y="677.60" width="3" height="3" fill="#0b6dc1"/><path d="M143.39 677.60h3v0.60a2.40 2.40 0 0 1 -2.40 2.40h-0.60z" fill="#2b9cb4"/><rect x="529.40" y="669.80" width="3" height="3" fill="#8983cc"/><rect x="537.38" y="669.80" width="3" height="3" fill="#5bbfcb"/><rect x="529.40" y="673.67" width="3" height="3" fill="#0b6dc1"/><path d="M537.38 673.67h3v0.60a2.40 2.40 0 0 1 -2.40 2.40h-0.60z" fill="#2b9cb4"/><rect x="529.40" y="677.60" width="3" height="3" fill="#0b6dc1"/><path d="M533.39 677.60h3v0.60a2.40 2.40 0 0 1 -2.40 2.40h-0.60z" fill="#2b9cb4"/><rect x="642.60" y="669.80" width="3" height="3" fill="#8983cc"/><rect x="650.58" y="669.80" width="3" height="3" fill="#5bbfcb"/><rect x="642.60" y="673.67" width="3" height="3" fill="#0b6dc1"/><path d="M650.58 673.67h3v0.60a2.40 2.40 0 0 1 -2.40 2.40h-0.60z" fill="#2b9cb4"/><rect x="642.60" y="677.60" width="3" height="3" fill="#0b6dc1"/><path d="M646.59 677.60h3v0.60a2.40 2.40 0 0 1 -2.40 2.40h-0.60z" fill="#2b9cb4"/></svg>
<svg style="left:0px;top:0px;" width="1679" height="903" viewBox="0 0 1679 903"><rect x="139" y="729.1" width="158" height="26.8" fill="#f0f0f0"/><path d="M139 755.9 L139.0 750.1 L139.6 749.9 L140.1 750.0 L140.7 741.5 L141.2 749.7 L141.8 742.7 L142.3 745.6 L142.9 748.4 L143.4 746.0 L144.0 742.2 L144.5 738.0 L145.1 741.7 L145.6 744.9 L146.2 746.5 L146.7 747.5 L147.3 748.3 L147.8 749.0 L148.4 749.3 L148.9 749.7 L149.5 750.0 L150.0 747.9 L150.6 745.5 L151.1 742.4 L151.7 738.9 L152.2 738.4 L152.8 741.9 L153.3 744.9 L153.9 746.1 L154.4 746.8 L155.0 747.3 L155.5 748.0 L156.1 748.3 L156.6 748.5 L157.2 749.1 L157.7 748.9 L158.3 748.4 L158.8 746.7 L159.4 743.8 L159.9 745.3 L160.5 747.2 L161.0 746.8 L161.6 746.4 L162.1 744.4 L162.7 740.8 L163.2 737.2 L163.8 737.9 L164.3 740.4 L164.9 742.9 L165.4 745.2 L166.0 747.0 L166.5 748.8 L167.1 749.3 L167.6 749.1 L168.2 749.6 L168.7 749.6 L169.3 749.8 L169.8 749.9 L170.4 750.1 L170.9 750.1 L171.5 749.9 L172.0 750.0 L172.6 750.1 L173.1 750.0 L173.7 750.0 L174.2 749.1 L174.8 746.5 L175.3 743.8 L175.9 740.3 L176.4 737.3 L177.0 737.7 L177.5 740.0 L178.1 742.7 L178.6 745.4 L179.2 748.1 L179.7 750.3 L180.3 750.5 L180.8 750.3 L181.4 750.2 L181.9 750.1 L182.5 749.9 L183.0 750.1 L183.6 749.9 L184.1 750.1 L184.7 750.1 L185.2 750.1 L185.8 749.8 L186.3 749.8 L186.9 749.7 L187.4 750.1 L188.0 747.0 L188.5 743.1 L189.1 741.3 L189.6 739.9 L190.2 738.3 L190.7 737.0 L191.3 736.0 L191.8 736.2 L192.4 736.5 L192.9 736.8 L193.5 737.0 L194.0 737.2 L194.6 736.9 L195.1 737.2 L195.7 737.4 L196.2 737.4 L196.8 737.3 L197.3 737.4 L197.9 737.2 L198.4 737.2 L199.0 737.3 L199.5 737.1 L200.1 737.3 L200.6 737.8 L201.2 738.4 L201.7 739.0 L202.3 739.2 L202.8 738.9 L203.4 738.5 L203.9 738.1 L204.5 738.2 L205.0 738.8 L205.6 739.3 L206.1 739.6 L206.7 739.9 L207.2 740.4 L207.8 740.5 L208.3 740.2 L208.9 740.5 L209.4 740.7 L210.0 740.8 L210.5 740.8 L211.1 740.5 L211.6 740.6 L212.2 740.8 L212.7 740.6 L213.3 740.8 L213.8 741.1 L214.4 741.1 L214.9 741.1 L215.5 741.3 L216.0 741.3 L216.6 741.0 L217.1 741.4 L217.7 741.4 L218.2 741.4 L218.8 741.5 L219.3 741.2 L219.9 741.5 L220.4 741.7 L221.0 741.8 L221.5 741.8 L222.1 741.8 L222.6 741.8 L223.2 741.6 L223.7 741.6 L224.3 741.9 L224.8 741.8 L225.4 742.0 L225.9 742.0 L226.5 742.0 L227.0 741.9 L227.6 742.1 L228.1 741.7 L228.7 742.1 L229.2 742.1 L229.8 741.8 L230.3 742.1 L230.9 742.2 L231.4 742.2 L232.0 742.0 L232.5 742.3 L233.1 742.2 L233.6 742.1 L234.2 742.0 L234.7 742.1 L235.3 742.0 L235.8 742.2 L236.4 742.3 L236.9 742.3 L237.5 742.1 L238.0 742.2 L238.6 742.2 L239.1 742.2 L239.7 742.5 L240.2 742.6 L240.8 742.4 L241.3 742.7 L241.9 742.4 L242.4 742.5 L243.0 742.8 L243.5 742.7 L244.1 742.4 L244.6 742.6 L245.2 742.5 L245.7 742.5 L246.3 742.7 L246.8 742.8 L247.4 743.0 L247.9 742.8 L248.5 742.8 L249.0 743.0 L249.6 743.0 L250.1 743.1 L250.7 743.0 L251.2 742.9 L251.8 743.2 L252.3 743.2 L252.9 743.3 L253.4 743.3 L254.0 743.1 L254.5 743.3 L255.1 743.4 L255.6 743.0 L256.2 743.0 L256.7 743.3 L257.3 743.1 L257.8 743.4 L258.4 743.4 L258.9 743.3 L259.5 743.4 L260.0 743.4 L260.6 743.0 L261.1 743.4 L261.7 743.4 L262.2 743.4 L262.8 743.4 L263.3 743.4 L263.9 743.4 L264.4 743.4 L265.0 743.3 L265.5 743.4 L266.1 743.4 L266.6 743.4 L267.2 743.3 L267.7 743.3 L268.3 743.0 L268.8 743.1 L269.4 743.2 L269.9 743.2 L270.5 743.3 L271.0 743.3 L271.6 743.3 L272.1 743.4 L272.7 743.1 L273.2 743.0 L273.8 743.3 L274.3 743.0 L274.9 743.4 L275.4 743.3 L276.0 743.4 L276.5 743.0 L277.1 743.4 L277.6 743.4 L278.2 743.2 L278.7 743.4 L279.3 743.0 L279.8 743.4 L280.4 743.4 L280.9 743.4 L281.5 743.4 L282.0 743.3 L282.6 743.1 L283.1 743.4 L283.7 743.4 L284.2 743.4 L284.8 743.2 L285.3 743.3 L285.9 743.4 L286.4 743.4 L287.0 743.4 L287.5 743.2 L288.1 743.0 L288.6 743.3 L289.2 743.4 L289.7 743.4 L290.3 743.1 L290.8 743.3 L291.4 743.4 L291.9 743.0 L292.5 743.4 L293.0 743.3 L293.6 743.0 L294.1 743.3 L294.7 743.2 L295.2 743.3 L295.8 743.4 L296.3 743.4 L296.9 743.0 L297 743.3L297 755.9Z" fill="#6a6a6a"/><rect x="299" y="729.1" width="227" height="26.8" fill="#f0f0f0"/><path d="M299 755.9 L299.0 752.6 L300.0 751.0 L301.0 751.8 L302.0 749.0 L303.0 749.0 L304.0 748.7 L305.0 748.4 L306.0 746.3 L307.0 747.5 L308.0 747.5 L309.0 748.7 L310.0 748.7 L311.0 747.4 L312.0 748.6 L313.0 749.4 L314.0 750.3 L315.0 751.2 L316.0 751.4 L317.0 752.3 L318.0 749.8 L319.0 749.1 L320.0 748.6 L321.0 749.2 L322.0 750.3 L323.0 749.4 L324.0 750.4 L325.0 750.3 L326.0 747.6 L327.0 750.1 L328.0 748.7 L329.0 749.8 L330.0 749.7 L331.0 749.8 L332.0 748.0 L333.0 749.6 L334.0 748.3 L335.0 749.4 L336.0 749.8 L337.0 749.6 L338.0 748.9 L339.0 749.8 L340.0 747.8 L341.0 749.7 L342.0 749.6 L343.0 748.3 L344.0 748.8 L345.0 749.0 L346.0 746.8 L347.0 747.1 L348.0 748.9 L349.0 746.3 L350.0 748.5 L351.0 748.4 L352.0 747.8 L353.0 747.9 L354.0 746.6 L355.0 745.3 L356.0 747.2 L357.0 745.8 L358.0 745.9 L359.0 749.4 L360.0 747.6 L361.0 749.8 L362.0 751.0 L363.0 750.5 L364.0 751.4 L365.0 749.6 L366.0 748.2 L367.0 747.2 L368.0 747.6 L369.0 747.0 L370.0 747.3 L371.0 744.1 L372.0 742.0 L373.0 738.8 L374.0 739.0 L375.0 740.8 L376.0 741.9 L377.0 740.8 L378.0 743.5 L379.0 743.4 L380.0 745.1 L381.0 744.4 L382.0 745.3 L383.0 746.4 L384.0 744.6 L385.0 745.1 L386.0 742.6 L387.0 737.8 L388.0 745.6 L389.0 747.7 L390.0 744.0 L391.0 742.1 L392.0 743.2 L393.0 746.4 L394.0 746.5 L395.0 748.1 L396.0 746.8 L397.0 746.7 L398.0 746.4 L399.0 747.6 L400.0 747.4 L401.0 749.7 L402.0 751.1 L403.0 751.4 L404.0 752.0 L405.0 750.1 L406.0 746.2 L407.0 740.8 L408.0 742.0 L409.0 742.0 L410.0 742.2 L411.0 745.3 L412.0 744.2 L413.0 743.0 L414.0 742.0 L415.0 743.5 L416.0 745.7 L417.0 744.1 L418.0 744.5 L419.0 744.0 L420.0 743.3 L421.0 743.3 L422.0 744.0 L423.0 745.2 L424.0 746.7 L425.0 748.0 L426.0 749.0 L427.0 750.0 L428.0 751.7 L429.0 752.3 L430.0 752.2 L431.0 751.6 L432.0 749.9 L433.0 746.9 L434.0 744.5 L435.0 742.3 L436.0 741.2 L437.0 739.4 L438.0 740.4 L439.0 743.0 L440.0 745.5 L441.0 747.2 L442.0 747.6 L443.0 747.1 L444.0 748.4 L445.0 746.2 L446.0 748.2 L447.0 749.4 L448.0 748.3 L449.0 748.9 L450.0 746.7 L451.0 747.3 L452.0 744.7 L453.0 744.2 L454.0 744.8 L455.0 747.1 L456.0 746.4 L457.0 748.5 L458.0 747.9 L459.0 746.7 L460.0 748.0 L461.0 747.2 L462.0 749.7 L463.0 750.2 L464.0 749.8 L465.0 751.0 L466.0 751.2 L467.0 752.3 L468.0 749.7 L469.0 748.2 L470.0 747.3 L471.0 744.7 L472.0 746.7 L473.0 748.4 L474.0 750.1 L475.0 748.3 L476.0 745.8 L477.0 744.6 L478.0 747.6 L479.0 748.5 L480.0 748.4 L481.0 747.5 L482.0 746.9 L483.0 746.7 L484.0 746.3 L485.0 743.8 L486.0 743.9 L487.0 742.8 L488.0 743.1 L489.0 742.8 L490.0 740.8 L491.0 742.7 L492.0 742.6 L493.0 740.2 L494.0 741.5 L495.0 740.5 L496.0 742.4 L497.0 740.5 L498.0 742.4 L499.0 742.3 L500.0 739.9 L501.0 742.0 L502.0 743.3 L503.0 745.5 L504.0 749.0 L505.0 748.8 L506.0 750.0 L507.0 750.8 L508.0 749.8 L509.0 748.5 L510.0 744.6 L511.0 745.7 L512.0 743.8 L513.0 745.3 L514.0 744.2 L515.0 745.4 L516.0 745.0 L517.0 744.5 L518.0 744.9 L519.0 744.4 L520.0 745.7 L521.0 748.3 L522.0 746.6 L523.0 747.1 L524.0 744.8 L525.0 749.1 L526.0 750.4 L526 750.3L526 755.9Z" fill="#6a6a6a"/><rect x="529" y="729.1" width="110.60000000000002" height="26.8" fill="#f0f0f0"/><path d="M529 755.9 L529.0 748.0 L530.0 749.6 L531.0 749.0 L532.0 750.4 L533.0 749.4 L534.0 750.1 L535.0 750.5 L536.0 750.5 L537.0 748.6 L538.0 750.4 L539.0 750.7 L540.0 747.0 L541.0 746.2 L542.0 750.5 L543.0 750.2 L544.0 750.0 L545.0 749.2 L546.0 750.6 L547.0 750.8 L548.0 749.8 L549.0 747.4 L550.0 745.1 L551.0 743.9 L552.0 739.6 L553.0 738.2 L554.0 741.4 L555.0 743.0 L556.0 742.8 L557.0 741.4 L558.0 742.3 L559.0 741.1 L560.0 741.0 L561.0 741.9 L562.0 740.6 L563.0 737.4 L564.0 739.2 L565.0 741.6 L566.0 743.5 L567.0 744.2 L568.0 745.0 L569.0 744.3 L570.0 744.9 L571.0 746.1 L572.0 746.0 L573.0 747.1 L574.0 747.0 L575.0 748.8 L576.0 748.8 L577.0 749.2 L578.0 747.9 L579.0 747.6 L580.0 747.7 L581.0 749.5 L582.0 749.7 L583.0 748.5 L584.0 749.6 L585.0 748.7 L586.0 749.0 L587.0 748.0 L588.0 749.9 L589.0 747.8 L590.0 747.7 L591.0 749.7 L592.0 748.6 L593.0 749.6 L594.0 748.3 L595.0 746.5 L596.0 744.4 L597.0 747.5 L598.0 746.7 L599.0 746.2 L600.0 745.7 L601.0 747.1 L602.0 747.1 L603.0 748.6 L604.0 747.8 L605.0 747.7 L606.0 744.2 L607.0 744.0 L608.0 745.2 L609.0 746.5 L610.0 747.6 L611.0 748.6 L612.0 749.2 L613.0 747.0 L614.0 748.0 L615.0 747.4 L616.0 745.0 L617.0 745.8 L618.0 743.6 L619.0 743.3 L620.0 744.5 L621.0 743.3 L622.0 743.7 L623.0 743.5 L624.0 743.1 L625.0 743.4 L626.0 742.3 L627.0 742.5 L628.0 742.0 L629.0 741.8 L630.0 740.3 L631.0 740.5 L632.0 740.5 L633.0 742.7 L634.0 742.6 L635.0 742.2 L636.0 740.1 L637.0 741.8 L638.0 742.0 L639.0 741.6 L639.6 742.0L639.6 755.9Z" fill="#6a6a6a"/><rect x="642.2" y="729.1" width="136.79999999999995" height="26.8" fill="#f0f0f0"/><path d="M642.2 755.9 L642.2 740.7 L643.2 741.9 L644.2 742.0 L645.2 741.0 L646.2 742.4 L647.2 741.2 L648.2 742.3 L649.2 741.6 L650.2 741.1 L651.2 740.5 L652.2 739.4 L653.2 737.0 L654.2 741.9 L655.2 742.7 L656.2 740.8 L657.2 739.7 L658.2 741.7 L659.2 744.9 L660.2 745.4 L661.2 746.7 L662.2 744.8 L663.2 744.3 L664.2 741.5 L665.2 740.9 L666.2 741.2 L667.2 741.0 L668.2 741.2 L669.2 741.3 L670.2 742.4 L671.2 742.8 L672.2 743.4 L673.2 743.9 L674.2 744.2 L675.2 745.1 L676.2 744.7 L677.2 747.4 L678.2 747.4 L679.2 745.5 L680.2 744.6 L681.2 747.2 L682.2 747.3 L683.2 744.8 L684.2 743.1 L685.2 743.9 L686.2 745.4 L687.2 745.1 L688.2 746.8 L689.2 747.0 L690.2 746.4 L691.2 745.2 L692.2 747.2 L693.2 746.6 L694.2 748.0 L695.2 746.3 L696.2 745.7 L697.2 744.9 L698.2 743.5 L699.2 743.9 L700.2 744.7 L701.2 746.7 L702.2 747.1 L703.2 746.1 L704.2 746.6 L705.2 746.3 L706.2 746.2 L707.2 746.2 L708.2 745.7 L709.2 746.2 L710.2 744.7 L711.2 745.0 L712.2 747.2 L713.2 747.6 L714.2 748.3 L715.2 746.8 L716.2 746.9 L717.2 746.1 L718.2 744.6 L719.2 745.2 L720.2 746.6 L721.2 746.8 L722.2 747.2 L723.2 746.4 L724.2 744.0 L725.2 744.2 L726.2 746.1 L727.2 745.1 L728.2 745.5 L729.2 747.7 L730.2 747.4 L731.2 747.1 L732.2 744.8 L733.2 746.5 L734.2 745.7 L735.2 745.8 L736.2 744.5 L737.2 744.8 L738.2 745.4 L739.2 744.3 L740.2 745.1 L741.2 744.1 L742.2 744.2 L743.2 743.9 L744.2 744.8 L745.2 744.9 L746.2 744.7 L747.2 745.1 L748.2 744.6 L749.2 744.1 L750.2 745.3 L751.2 744.9 L752.2 745.2 L753.2 744.2 L754.2 744.5 L755.2 744.9 L756.2 745.7 L757.2 744.4 L758.2 744.2 L759.2 745.5 L760.2 744.0 L761.2 745.5 L762.2 745.9 L763.2 746.3 L764.2 745.2 L765.2 746.2 L766.2 745.7 L767.2 746.7 L768.2 745.4 L769.2 745.7 L770.2 744.2 L771.2 745.2 L772.2 745.8 L773.2 745.6 L774.2 744.2 L775.2 746.1 L776.2 746.5 L777.2 746.8 L778.2 745.6 L779 747.1L779 755.9Z" fill="#6a6a6a"/><rect x="297" y="729.1" width="2.300" height="26.8" fill="#b4b4b4"/><rect x="526.3" y="729.1" width="2.300" height="26.8" fill="#b4b4b4"/><rect x="639.7" y="729.1" width="2.300" height="26.8" fill="#b4b4b4"/><rect x="139" y="755.9" width="640" height="1.500" fill="#bcbcbc"/><rect x="139" y="758" width="158" height="26.9" fill="#f0f0f0"/><path d="M139 784.9 L139.0 779.1 L139.6 778.9 L140.1 778.9 L140.7 770.5 L141.2 778.7 L141.8 771.7 L142.3 774.6 L142.9 777.3 L143.4 775.0 L144.0 771.2 L144.5 767.0 L145.1 770.7 L145.6 773.9 L146.2 775.5 L146.7 776.5 L147.3 777.3 L147.8 777.9 L148.4 778.3 L148.9 778.7 L149.5 778.9 L150.0 776.8 L150.6 774.5 L151.1 771.3 L151.7 767.8 L152.2 767.3 L152.8 770.9 L153.3 773.9 L153.9 775.0 L154.4 775.8 L155.0 776.2 L155.5 777.0 L156.1 777.3 L156.6 777.4 L157.2 778.1 L157.7 777.9 L158.3 777.4 L158.8 775.7 L159.4 772.7 L159.9 774.3 L160.5 776.1 L161.0 775.8 L161.6 775.3 L162.1 773.4 L162.7 769.8 L163.2 766.2 L163.8 766.8 L164.3 769.3 L164.9 771.9 L165.4 774.1 L166.0 776.0 L166.5 777.8 L167.1 778.2 L167.6 778.1 L168.2 778.6 L168.7 778.6 L169.3 778.8 L169.8 778.9 L170.4 779.1 L170.9 779.1 L171.5 778.8 L172.0 779.0 L172.6 779.1 L173.1 779.0 L173.7 779.0 L174.2 778.1 L174.8 775.5 L175.3 772.7 L175.9 769.2 L176.4 766.2 L177.0 766.7 L177.5 769.0 L178.1 771.7 L178.6 774.4 L179.2 777.1 L179.7 779.3 L180.3 779.5 L180.8 779.3 L181.4 779.2 L181.9 779.1 L182.5 778.9 L183.0 779.0 L183.6 778.8 L184.1 779.1 L184.7 779.1 L185.2 779.1 L185.8 778.8 L186.3 778.8 L186.9 778.7 L187.4 779.1 L188.0 775.9 L188.5 772.1 L189.1 770.3 L189.6 768.8 L190.2 767.3 L190.7 765.9 L191.3 765.0 L191.8 765.1 L192.4 765.5 L192.9 765.8 L193.5 766.0 L194.0 766.1 L194.6 765.9 L195.1 766.1 L195.7 766.3 L196.2 766.4 L196.8 766.2 L197.3 766.3 L197.9 766.2 L198.4 766.1 L199.0 766.3 L199.5 766.0 L200.1 766.2 L200.6 766.7 L201.2 767.3 L201.7 767.9 L202.3 768.2 L202.8 767.8 L203.4 767.4 L203.9 767.0 L204.5 767.2 L205.0 767.7 L205.6 768.3 L206.1 768.6 L206.7 768.9 L207.2 769.4 L207.8 769.4 L208.3 769.2 L208.9 769.4 L209.4 769.6 L210.0 769.7 L210.5 769.8 L211.1 769.4 L211.6 769.6 L212.2 769.8 L212.7 769.5 L213.3 769.8 L213.8 770.1 L214.4 770.0 L214.9 770.0 L215.5 770.2 L216.0 770.3 L216.6 769.9 L217.1 770.3 L217.7 770.3 L218.2 770.3 L218.8 770.4 L219.3 770.2 L219.9 770.5 L220.4 770.6 L221.0 770.7 L221.5 770.7 L222.1 770.8 L222.6 770.7 L223.2 770.5 L223.7 770.5 L224.3 770.8 L224.8 770.8 L225.4 770.9 L225.9 770.9 L226.5 771.0 L227.0 770.9 L227.6 771.0 L228.1 770.7 L228.7 771.1 L229.2 771.1 L229.8 770.7 L230.3 771.1 L230.9 771.2 L231.4 771.1 L232.0 770.9 L232.5 771.2 L233.1 771.2 L233.6 771.0 L234.2 771.0 L234.7 771.0 L235.3 770.9 L235.8 771.1 L236.4 771.3 L236.9 771.2 L237.5 771.0 L238.0 771.2 L238.6 771.2 L239.1 771.1 L239.7 771.5 L240.2 771.5 L240.8 771.3 L241.3 771.6 L241.9 771.4 L242.4 771.5 L243.0 771.7 L243.5 771.6 L244.1 771.3 L244.6 771.5 L245.2 771.4 L245.7 771.4 L246.3 771.6 L246.8 771.7 L247.4 771.9 L247.9 771.8 L248.5 771.7 L249.0 772.0 L249.6 771.9 L250.1 772.1 L250.7 772.0 L251.2 771.9 L251.8 772.2 L252.3 772.2 L252.9 772.2 L253.4 772.3 L254.0 772.0 L254.5 772.3 L255.1 772.3 L255.6 771.9 L256.2 772.0 L256.7 772.3 L257.3 772.1 L257.8 772.3 L258.4 772.3 L258.9 772.3 L259.5 772.3 L260.0 772.3 L260.6 771.9 L261.1 772.3 L261.7 772.3 L262.2 772.3 L262.8 772.4 L263.3 772.3 L263.9 772.3 L264.4 772.4 L265.0 772.3 L265.5 772.4 L266.1 772.4 L266.6 772.4 L267.2 772.3 L267.7 772.3 L268.3 772.0 L268.8 772.0 L269.4 772.2 L269.9 772.2 L270.5 772.3 L271.0 772.3 L271.6 772.3 L272.1 772.3 L272.7 772.0 L273.2 772.0 L273.8 772.2 L274.3 772.0 L274.9 772.3 L275.4 772.3 L276.0 772.4 L276.5 772.0 L277.1 772.3 L277.6 772.3 L278.2 772.2 L278.7 772.3 L279.3 771.9 L279.8 772.3 L280.4 772.4 L280.9 772.4 L281.5 772.3 L282.0 772.3 L282.6 772.0 L283.1 772.3 L283.7 772.4 L284.2 772.4 L284.8 772.2 L285.3 772.3 L285.9 772.3 L286.4 772.3 L287.0 772.4 L287.5 772.2 L288.1 771.9 L288.6 772.3 L289.2 772.3 L289.7 772.3 L290.3 772.0 L290.8 772.2 L291.4 772.3 L291.9 772.0 L292.5 772.3 L293.0 772.2 L293.6 771.9 L294.1 772.2 L294.7 772.2 L295.2 772.3 L295.8 772.3 L296.3 772.3 L296.9 771.9 L297 772.3L297 784.9Z" fill="#6a6a6a"/><rect x="299" y="758" width="227" height="26.9" fill="#f0f0f0"/><path d="M299 784.9 L299.0 781.6 L300.0 780.0 L301.0 780.7 L302.0 778.0 L303.0 777.9 L304.0 777.7 L305.0 777.4 L306.0 775.3 L307.0 776.5 L308.0 776.5 L309.0 777.6 L310.0 777.7 L311.0 776.4 L312.0 777.6 L313.0 778.4 L314.0 779.3 L315.0 780.2 L316.0 780.4 L317.0 781.3 L318.0 778.8 L319.0 778.0 L320.0 777.6 L321.0 778.1 L322.0 779.3 L323.0 778.4 L324.0 779.3 L325.0 779.3 L326.0 776.6 L327.0 779.0 L328.0 777.6 L329.0 778.7 L330.0 778.6 L331.0 778.7 L332.0 777.0 L333.0 778.6 L334.0 777.2 L335.0 778.3 L336.0 778.7 L337.0 778.6 L338.0 777.9 L339.0 778.7 L340.0 776.8 L341.0 778.7 L342.0 778.5 L343.0 777.3 L344.0 777.8 L345.0 778.0 L346.0 775.7 L347.0 776.0 L348.0 777.8 L349.0 775.2 L350.0 777.5 L351.0 777.3 L352.0 776.8 L353.0 776.9 L354.0 775.5 L355.0 774.3 L356.0 776.2 L357.0 774.8 L358.0 774.9 L359.0 778.3 L360.0 776.5 L361.0 778.7 L362.0 780.0 L363.0 779.5 L364.0 780.4 L365.0 778.6 L366.0 777.1 L367.0 776.1 L368.0 776.6 L369.0 775.9 L370.0 776.3 L371.0 773.0 L372.0 770.9 L373.0 767.7 L374.0 768.0 L375.0 769.8 L376.0 770.9 L377.0 769.7 L378.0 772.4 L379.0 772.3 L380.0 774.0 L381.0 773.3 L382.0 774.2 L383.0 775.4 L384.0 773.5 L385.0 774.1 L386.0 771.6 L387.0 766.7 L388.0 774.6 L389.0 776.7 L390.0 773.0 L391.0 771.0 L392.0 772.2 L393.0 775.3 L394.0 775.5 L395.0 777.1 L396.0 775.8 L397.0 775.7 L398.0 775.4 L399.0 776.5 L400.0 776.3 L401.0 778.7 L402.0 780.1 L403.0 780.3 L404.0 781.0 L405.0 779.1 L406.0 775.1 L407.0 769.7 L408.0 770.9 L409.0 771.0 L410.0 771.1 L411.0 774.2 L412.0 773.2 L413.0 772.0 L414.0 771.0 L415.0 772.5 L416.0 774.7 L417.0 773.1 L418.0 773.4 L419.0 772.9 L420.0 772.2 L421.0 772.2 L422.0 773.0 L423.0 774.2 L424.0 775.7 L425.0 777.0 L426.0 778.0 L427.0 778.9 L428.0 780.7 L429.0 781.3 L430.0 781.2 L431.0 780.6 L432.0 778.9 L433.0 775.9 L434.0 773.4 L435.0 771.3 L436.0 770.2 L437.0 768.3 L438.0 769.3 L439.0 771.9 L440.0 774.4 L441.0 776.2 L442.0 776.6 L443.0 776.1 L444.0 777.4 L445.0 775.1 L446.0 777.2 L447.0 778.4 L448.0 777.3 L449.0 777.9 L450.0 775.7 L451.0 776.2 L452.0 773.6 L453.0 773.2 L454.0 773.8 L455.0 776.1 L456.0 775.4 L457.0 777.5 L458.0 776.8 L459.0 775.7 L460.0 777.0 L461.0 776.2 L462.0 778.7 L463.0 779.2 L464.0 778.8 L465.0 780.0 L466.0 780.2 L467.0 781.3 L468.0 778.7 L469.0 777.2 L470.0 776.2 L471.0 773.7 L472.0 775.7 L473.0 777.3 L474.0 779.1 L475.0 777.3 L476.0 774.7 L477.0 773.5 L478.0 776.6 L479.0 777.5 L480.0 777.4 L481.0 776.4 L482.0 775.8 L483.0 775.6 L484.0 775.2 L485.0 772.7 L486.0 772.9 L487.0 771.8 L488.0 772.0 L489.0 771.7 L490.0 769.8 L491.0 771.7 L492.0 771.6 L493.0 769.2 L494.0 770.4 L495.0 769.4 L496.0 771.4 L497.0 769.5 L498.0 771.3 L499.0 771.3 L500.0 768.9 L501.0 770.9 L502.0 772.2 L503.0 774.5 L504.0 778.0 L505.0 777.8 L506.0 779.0 L507.0 779.8 L508.0 778.8 L509.0 777.5 L510.0 773.5 L511.0 774.6 L512.0 772.7 L513.0 774.2 L514.0 773.1 L515.0 774.4 L516.0 773.9 L517.0 773.5 L518.0 773.9 L519.0 773.3 L520.0 774.7 L521.0 777.3 L522.0 775.5 L523.0 776.1 L524.0 773.8 L525.0 778.1 L526.0 779.4 L526 779.3L526 784.9Z" fill="#6a6a6a"/><rect x="529" y="758" width="110.60000000000002" height="26.9" fill="#f0f0f0"/><path d="M529 784.9 L529.0 777.0 L530.0 778.6 L531.0 778.0 L532.0 779.4 L533.0 778.3 L534.0 779.1 L535.0 779.5 L536.0 779.5 L537.0 777.5 L538.0 779.4 L539.0 779.7 L540.0 776.0 L541.0 775.1 L542.0 779.4 L543.0 779.2 L544.0 779.0 L545.0 778.1 L546.0 779.6 L547.0 779.8 L548.0 778.8 L549.0 776.4 L550.0 774.0 L551.0 772.8 L552.0 768.6 L553.0 767.1 L554.0 770.4 L555.0 771.9 L556.0 771.7 L557.0 770.3 L558.0 771.3 L559.0 770.0 L560.0 770.0 L561.0 770.9 L562.0 769.6 L563.0 766.3 L564.0 768.2 L565.0 770.6 L566.0 772.4 L567.0 773.1 L568.0 774.0 L569.0 773.3 L570.0 773.9 L571.0 775.1 L572.0 775.0 L573.0 776.0 L574.0 775.9 L575.0 777.8 L576.0 777.8 L577.0 778.2 L578.0 776.9 L579.0 776.6 L580.0 776.7 L581.0 778.5 L582.0 778.7 L583.0 777.4 L584.0 778.6 L585.0 777.7 L586.0 778.0 L587.0 777.0 L588.0 778.9 L589.0 776.7 L590.0 776.7 L591.0 778.6 L592.0 777.6 L593.0 778.6 L594.0 777.3 L595.0 775.5 L596.0 773.4 L597.0 776.5 L598.0 775.7 L599.0 775.1 L600.0 774.7 L601.0 776.0 L602.0 776.1 L603.0 777.5 L604.0 776.8 L605.0 776.7 L606.0 773.2 L607.0 773.0 L608.0 774.2 L609.0 775.4 L610.0 776.5 L611.0 777.6 L612.0 778.2 L613.0 776.0 L614.0 777.0 L615.0 776.3 L616.0 774.0 L617.0 774.8 L618.0 772.6 L619.0 772.2 L620.0 773.4 L621.0 772.3 L622.0 772.7 L623.0 772.4 L624.0 772.1 L625.0 772.3 L626.0 771.2 L627.0 771.5 L628.0 771.0 L629.0 770.7 L630.0 769.3 L631.0 769.4 L632.0 769.4 L633.0 771.7 L634.0 771.5 L635.0 771.2 L636.0 769.1 L637.0 770.8 L638.0 771.0 L639.0 770.6 L639.6 770.9L639.6 784.9Z" fill="#6a6a6a"/><rect x="642.2" y="758" width="136.79999999999995" height="26.9" fill="#f0f0f0"/><path d="M642.2 784.9 L642.2 769.6 L643.2 770.8 L644.2 770.9 L645.2 770.0 L646.2 771.3 L647.2 770.2 L648.2 771.2 L649.2 770.5 L650.2 770.0 L651.2 769.5 L652.2 768.3 L653.2 765.9 L654.2 770.9 L655.2 771.7 L656.2 769.7 L657.2 768.6 L658.2 770.7 L659.2 773.8 L660.2 774.3 L661.2 775.6 L662.2 773.7 L663.2 773.3 L664.2 770.4 L665.2 769.8 L666.2 770.2 L667.2 769.9 L668.2 770.1 L669.2 770.3 L670.2 771.3 L671.2 771.8 L672.2 772.4 L673.2 772.9 L674.2 773.2 L675.2 774.0 L676.2 773.6 L677.2 776.4 L678.2 776.4 L679.2 774.5 L680.2 773.5 L681.2 776.1 L682.2 776.3 L683.2 773.8 L684.2 772.0 L685.2 772.9 L686.2 774.4 L687.2 774.1 L688.2 775.7 L689.2 775.9 L690.2 775.4 L691.2 774.2 L692.2 776.2 L693.2 775.6 L694.2 777.0 L695.2 775.3 L696.2 774.7 L697.2 773.9 L698.2 772.4 L699.2 772.9 L700.2 773.6 L701.2 775.7 L702.2 776.0 L703.2 775.1 L704.2 775.6 L705.2 775.3 L706.2 775.2 L707.2 775.1 L708.2 774.7 L709.2 775.2 L710.2 773.7 L711.2 773.9 L712.2 776.1 L713.2 776.6 L714.2 777.2 L715.2 775.7 L716.2 775.8 L717.2 775.0 L718.2 773.5 L719.2 774.2 L720.2 775.6 L721.2 775.8 L722.2 776.2 L723.2 775.3 L724.2 773.0 L725.2 773.1 L726.2 775.1 L727.2 774.0 L728.2 774.5 L729.2 776.6 L730.2 776.4 L731.2 776.1 L732.2 773.8 L733.2 775.4 L734.2 774.7 L735.2 774.8 L736.2 773.4 L737.2 773.8 L738.2 774.3 L739.2 773.2 L740.2 774.1 L741.2 773.0 L742.2 773.2 L743.2 772.9 L744.2 773.8 L745.2 773.9 L746.2 773.6 L747.2 774.1 L748.2 773.5 L749.2 773.0 L750.2 774.3 L751.2 773.8 L752.2 774.2 L753.2 773.1 L754.2 773.5 L755.2 773.9 L756.2 774.6 L757.2 773.3 L758.2 773.2 L759.2 774.5 L760.2 772.9 L761.2 774.4 L762.2 774.9 L763.2 775.2 L764.2 774.2 L765.2 775.1 L766.2 774.7 L767.2 775.6 L768.2 774.4 L769.2 774.7 L770.2 773.2 L771.2 774.2 L772.2 774.7 L773.2 774.6 L774.2 773.1 L775.2 775.1 L776.2 775.5 L777.2 775.7 L778.2 774.6 L779 776.0L779 784.9Z" fill="#6a6a6a"/><rect x="297" y="758" width="2.300" height="26.9" fill="#b4b4b4"/><rect x="526.3" y="758" width="2.300" height="26.9" fill="#b4b4b4"/><rect x="639.7" y="758" width="2.300" height="26.9" fill="#b4b4b4"/><rect x="139" y="784.9" width="640" height="1.500" fill="#bcbcbc"/></svg>
<div style="left:2px;top:884px;width:788px;height:10px;background:#e6e6e6;"></div>
<div style="left:139px;top:884px;width:640px;height:10px;background:#e9e9e9;"></div>
<div style="left:138px;top:884px;width:37px;height:10px;background:#8a8a8a;"></div>
<div style="left:2px;top:894px;width:837px;height:9px;background:#fff;"></div>
<div style="left:793px;top:536px;width:17px;height:346px;background:#e2e2e2;"></div>
<svg style="left:0px;top:0px;" width="1679" height="903" viewBox="0 0 1679 903"><rect x="810" y="534.00" width="7" height="1.2" fill="#777"/><rect x="810" y="539.91" width="4" height=".8" fill="#c4c4c4"/><rect x="810" y="545.63" width="4" height=".8" fill="#c4c4c4"/><rect x="810" y="551.34" width="4" height=".8" fill="#c4c4c4"/><rect x="810" y="557.05" width="4" height=".8" fill="#c4c4c4"/><rect x="810" y="562.77" width="4" height=".8" fill="#c4c4c4"/><rect x="810" y="568.28" width="7" height="1.2" fill="#777"/><rect x="810" y="574.19" width="4" height=".8" fill="#c4c4c4"/><rect x="810" y="579.90" width="4" height=".8" fill="#c4c4c4"/><rect x="810" y="585.62" width="4" height=".8" fill="#c4c4c4"/><rect x="810" y="591.33" width="4" height=".8" fill="#c4c4c4"/><rect x="810" y="597.04" width="4" height=".8" fill="#c4c4c4"/><rect x="810" y="602.56" width="7" height="1.2" fill="#777"/><rect x="810" y="608.47" width="4" height=".8" fill="#c4c4c4"/><rect x="810" y="614.18" width="4" height=".8" fill="#c4c4c4"/><rect x="810" y="619.90" width="4" height=".8" fill="#c4c4c4"/><rect x="810" y="625.61" width="4" height=".8" fill="#c4c4c4"/><rect x="810" y="631.32" width="4" height=".8" fill="#c4c4c4"/><rect x="810" y="636.83" width="7" height="1.2" fill="#777"/><rect x="810" y="642.75" width="4" height=".8" fill="#c4c4c4"/><rect x="810" y="648.46" width="4" height=".8" fill="#c4c4c4"/><rect x="810" y="654.17" width="4" height=".8" fill="#c4c4c4"/><rect x="810" y="659.89" width="4" height=".8" fill="#c4c4c4"/><rect x="810" y="665.60" width="4" height=".8" fill="#c4c4c4"/><rect x="810" y="671.11" width="7" height="1.2" fill="#777"/><rect x="810" y="677.02" width="4" height=".8" fill="#c4c4c4"/><rect x="810" y="682.74" width="4" height=".8" fill="#c4c4c4"/><rect x="810" y="688.45" width="4" height=".8" fill="#c4c4c4"/><rect x="810" y="694.16" width="4" height=".8" fill="#c4c4c4"/><rect x="810" y="699.88" width="4" height=".8" fill="#c4c4c4"/><rect x="810" y="705.39" width="7" height="1.2" fill="#777"/><rect x="810" y="711.30" width="4" height=".8" fill="#c4c4c4"/><rect x="810" y="717.02" width="4" height=".8" fill="#c4c4c4"/><rect x="810" y="722.73" width="4" height=".8" fill="#c4c4c4"/><rect x="810" y="728.44" width="4" height=".8" fill="#c4c4c4"/><rect x="810" y="734.16" width="4" height=".8" fill="#c4c4c4"/><rect x="810" y="739.67" width="7" height="1.2" fill="#777"/><rect x="810" y="745.58" width="4" height=".8" fill="#c4c4c4"/><rect x="810" y="751.29" width="4" height=".8" fill="#c4c4c4"/><rect x="810" y="757.01" width="4" height=".8" fill="#c4c4c4"/><rect x="810" y="762.72" width="4" height=".8" fill="#c4c4c4"/><rect x="810" y="768.43" width="4" height=".8" fill="#c4c4c4"/><rect x="810" y="773.95" width="7" height="1.2" fill="#777"/><rect x="810" y="779.86" width="4" height=".8" fill="#c4c4c4"/><rect x="810" y="785.57" width="4" height=".8" fill="#c4c4c4"/><rect x="810" y="791.28" width="4" height=".8" fill="#c4c4c4"/><rect x="810" y="797.00" width="4" height=".8" fill="#c4c4c4"/><rect x="810" y="802.71" width="4" height=".8" fill="#c4c4c4"/><rect x="810" y="808.22" width="7" height="1.2" fill="#777"/><rect x="810" y="814.14" width="4" height=".8" fill="#c4c4c4"/><rect x="810" y="819.85" width="4" height=".8" fill="#c4c4c4"/><rect x="810" y="825.56" width="4" height=".8" fill="#c4c4c4"/><rect x="810" y="831.28" width="4" height=".8" fill="#c4c4c4"/><rect x="810" y="836.99" width="4" height=".8" fill="#c4c4c4"/><rect x="810" y="842.50" width="7" height="1.2" fill="#777"/><rect x="810" y="848.42" width="4" height=".8" fill="#c4c4c4"/><rect x="810" y="854.13" width="4" height=".8" fill="#c4c4c4"/><rect x="810" y="859.84" width="4" height=".8" fill="#c4c4c4"/><rect x="810" y="865.55" width="4" height=".8" fill="#c4c4c4"/><rect x="810" y="871.27" width="4" height=".8" fill="#c4c4c4"/><rect x="810" y="876.78" width="7" height="1.2" fill="#777"/></svg>
<div style="left:822.8px;top:529.1px;font-size:10px;color:#666;line-height:14px;height:14px;white-space:nowrap;transform:scaleX(0.9889);transform-origin:0 0;font-weight:bold;">0</div>
<div style="left:823px;top:562.88px;font-size:10px;color:#666;line-height:14px;height:14px;white-space:nowrap;transform:scaleX(1.0346);transform-origin:0 0;font-weight:bold;">-6</div>
<div style="left:822.8px;top:597.1600000000001px;font-size:10px;color:#666;line-height:14px;height:14px;white-space:nowrap;transform:scaleX(1.0378);transform-origin:0 0;font-weight:bold;">-12</div>
<div style="left:822.8px;top:631.44px;font-size:10px;color:#666;line-height:14px;height:14px;white-space:nowrap;transform:scaleX(1.0378);transform-origin:0 0;font-weight:bold;">-18</div>
<div style="left:822.8px;top:665.72px;font-size:10px;color:#666;line-height:14px;height:14px;white-space:nowrap;transform:scaleX(1.0378);transform-origin:0 0;font-weight:bold;">-24</div>
<div style="left:822.8px;top:700.0px;font-size:10px;color:#666;line-height:14px;height:14px;white-space:nowrap;transform:scaleX(1.0378);transform-origin:0 0;font-weight:bold;">-30</div>
<div style="left:822.8px;top:734.28px;font-size:10px;color:#666;line-height:14px;height:14px;white-space:nowrap;transform:scaleX(1.0378);transform-origin:0 0;font-weight:bold;">-36</div>
<div style="left:822.8px;top:768.5600000000001px;font-size:10px;color:#666;line-height:14px;height:14px;white-space:nowrap;transform:scaleX(1.0378);transform-origin:0 0;font-weight:bold;">-42</div>
<div style="left:822.8px;top:802.84px;font-size:10px;color:#666;line-height:14px;height:14px;white-space:nowrap;transform:scaleX(1.0378);transform-origin:0 0;font-weight:bold;">-48</div>
<div style="left:822.8px;top:837.12px;font-size:10px;color:#666;line-height:14px;height:14px;white-space:nowrap;transform:scaleX(1.0378);transform-origin:0 0;font-weight:bold;">-54</div>
<div style="left:822.8px;top:871.4000000000001px;font-size:10px;color:#666;line-height:14px;height:14px;white-space:nowrap;transform:scaleX(1.0378);transform-origin:0 0;font-weight:bold;">-60</div>
<div style="left:794.6px;top:883.5px;font-size:10.5px;color:#777;line-height:14px;height:14px;white-space:nowrap;transform:scaleX(0.9288);transform-origin:0 0;font-weight:bold;">dB</div>
<div style="left:570px;top:3px;width:3px;height:414px;background:#e4e4e4;"></div>
<div style="left:570px;top:417px;width:3px;height:59px;background:#fff;"></div>
<div style="left:571.5px;top:417px;width:1px;height:59px;background:#d4d4d4;"></div>
<div style="left:838px;top:0px;width:1px;height:903px;background:#cfcfcf;"></div>
<svg style="left:587px;top:170px;" width="240" height="101" viewBox="0 0 240 101"><defs>
<filter id="b1" x="-20%" y="-20%" width="140%" height="140%"><feGaussianBlur stdDeviation="2.2"/></filter>
<filter id="b2" x="-20%" y="-20%" width="140%" height="140%"><feGaussianBlur stdDeviation="1"/></filter>
<filter id="b3" x="-20%" y="-20%" width="140%" height="140%"><feGaussianBlur stdDeviation="5"/></filter>
<linearGradient id="sky" x1="0" y1="0" x2="0" y2="1"><stop offset="0" stop-color="#3b4759"/><stop offset=".3" stop-color="#4c5663"/><stop offset=".52" stop-color="#77797a"/><stop offset=".62" stop-color="#8d8a78"/><stop offset="1" stop-color="#3a4226"/></linearGradient>
<linearGradient id="rock" x1="0" y1="0" x2="1" y2="1"><stop offset="0" stop-color="#90969c"/><stop offset=".45" stop-color="#667280"/><stop offset="1" stop-color="#44505e"/></linearGradient>
<clipPath id="cp1"><rect x="0" y="0" width="240" height="101"/></clipPath>
</defs><g clip-path="url(#cp1)"><rect width="240" height="101" fill="url(#sky)"/>
<ellipse cx="180" cy="20" rx="70" ry="16" fill="#6b7886" opacity=".55" filter="url(#b3)"/>
<ellipse cx="70" cy="16" rx="60" ry="20" fill="#2f3c52" opacity=".7" filter="url(#b3)"/>
<ellipse cx="150" cy="40" rx="50" ry="9" fill="#8e9294" opacity=".6" filter="url(#b3)"/>
<ellipse cx="160" cy="33" rx="14" ry="6" fill="#a4a6a0" opacity=".6" filter="url(#b1)"/>
<ellipse cx="195" cy="57" rx="62" ry="5" fill="#dcd29c" opacity=".9" filter="url(#b1)"/>
<ellipse cx="236" cy="50" rx="12" ry="6" fill="#ece4ae" opacity=".8" filter="url(#b1)"/>
<path d="M50 101V66q20-2 40-3q30-1 70 4l30 34z" fill="#4c5c2c" filter="url(#b1)"/>
<path d="M62 65q30-22 62-5q14 7 28 12l-90 2z" fill="#283a20" filter="url(#b1)"/>
<path d="M70 58l6-6 8 10z" fill="#6a6a66" opacity=".7" filter="url(#b2)"/>
<path d="M90 90q20-12 34-10l10 21H80z" fill="#141810" filter="url(#b1)"/>
<path d="M-2 -2h30q4 28 14 48q14 26 40 57H-2z" fill="#2a221b" filter="url(#b2)"/>
<path d="M8 -2h20q4 28 14 48l-12 6q-10-20-22-54z" fill="#5a4a3c" opacity=".5" filter="url(#b1)"/>
<path d="M-2 58q20-6 48 0q16 20 34 45H-2z" fill="#15190f" opacity=".85" filter="url(#b1)"/>
<path d="M4 52q18-7 36 2q-8 12-28 10z" fill="#9a9a88" opacity=".5" filter="url(#b2)"/>
<g stroke="#7a8a3c" stroke-width="1.100" fill="none" opacity=".8"><path d="M0 88q20-18 32-44M6 101q16-30 40-52M0 62q20 16 38 39M30 101q-6-24-28-44M48 101q-4-16-14-26"/></g>
<g stroke="#3a3430" stroke-width=".8" fill="none" opacity=".8"><path d="M40 0q4 16-2 30t4 26M62 0q-8 20-2 34t-6 22M80 0q6 22-6 40"/></g>
<path d="M72 101q40-10 70-30q22-14 48-13q30 2 46 20q6 8 8 23z" fill="url(#rock)" filter="url(#b2)"/>
<path d="M138 73q24-15 52-15q18 1 30 9q-30-5-50 3t-42 14z" fill="#b8bab4" opacity=".6" filter="url(#b2)"/>
<path d="M183 57q6-12 26-13t32-10v14q-12 6-28 7t-20 4z" fill="#15150f" filter="url(#b2)"/>
<path d="M222 64q10-6 20-4v16q-10 2-20-12z" fill="#15150f" filter="url(#b2)"/>
</g></svg>
<svg style="left:0px;top:0px;" width="1679" height="903" viewBox="0 0 1679 903"><rect x="575.00" y="146.50" width="8.4" height="8.4" fill="#8983cc"/><rect x="597.34" y="146.50" width="8.4" height="8.4" fill="#5bbfcb"/><rect x="575.00" y="157.34" width="8.4" height="8.4" fill="#0b6dc1"/><path d="M597.34 157.34h8.4v1.68a6.72 6.72 0 0 1 -6.72 6.72h-1.68z" fill="#2b9cb4"/><rect x="575.00" y="168.34" width="8.4" height="8.4" fill="#0b6dc1"/><path d="M586.17 168.34h8.4v1.68a6.72 6.72 0 0 1 -6.72 6.72h-1.68z" fill="#2b9cb4"/></svg>
<svg style="left:371.5px;top:427.5px;" width="6" height="4" viewBox="0 0 6 4"><path d="M.4 .4l2.600 2.600 2.600-2.600" fill="none" stroke="#666" stroke-width=".9"/></svg>
<div style="left:384.7px;top:426px;width:179.3px;height:1.5px;background:#cfcfcf;"></div>
<div style="left:384.7px;top:425.5px;width:1.3px;height:2.5px;background:#0a7a9a;"></div>
<div style="left:441px;top:425.8px;width:7.7px;height:2px;background:#1090b8;"></div>
<svg style="left:372px;top:452.5px;" width="10" height="8" viewBox="0 0 10 8"><g fill="#111"><path d="M2.200 .8h6v3.400h-1.200v-2.200h-4.800z"/><rect x=".5" y="5.800" width="6" height="1.500"/><path d="M7.300 5.200l2.200 1.400-2.200 1.400z"/></g></svg>
<svg style="left:403.8px;top:453px;" width="8" height="8" viewBox="0 0 8 8"><rect x=".3" y=".3" width="1.500" height="7.200" fill="#111"/><path d="M7.300 .3v7.200L1.800 3.900z" fill="#111"/></svg>
<svg style="left:434.7px;top:452.3px;" width="8" height="10" viewBox="0 0 8 10"><path d="M.3 .3v8.800l7.200-4.400z" fill="#111"/></svg>
<svg style="left:465.3px;top:453px;" width="8" height="8" viewBox="0 0 8 8"><rect x="5.800" y=".3" width="1.500" height="7.200" fill="#111"/><path d="M.3 .3v7.200l5.500-3.600z" fill="#111"/></svg>
<div style="left:495.7px;top:451.5px;width:2.4px;height:2.2px;background:#111;border-radius:50%;"></div>
<div style="left:495.7px;top:455.8px;width:2.4px;height:2.2px;background:#111;border-radius:50%;"></div>
<div style="left:495.7px;top:460.1px;width:2.4px;height:2.2px;background:#111;border-radius:50%;"></div>
<div style="left:644.5px;top:425px;width:190.2px;height:7.5px;background:#18b2e2;"></div>
<div style="left:644.5px;top:432.5px;width:190.2px;height:1.6px;background:#cfcfcf;"></div>
<div style="left:644.5px;top:432.5px;width:93px;height:2px;background:#1090b8;"></div>
<svg style="left:641.5px;top:425.5px;" width="6" height="10" viewBox="0 0 6 10"><path d="M0 0h6l-2.200 2.600v7h-1.600v-7z" fill="#111"/></svg>
<svg style="left:631.5px;top:453px;" width="8" height="8" viewBox="0 0 8 8"><rect x=".3" y=".3" width="1.500" height="7.200" fill="#111"/><path d="M7.300 .3v7.200L1.800 3.900z" fill="#111"/></svg>
<svg style="left:662.6px;top:452.3px;" width="8" height="10" viewBox="0 0 8 10"><path d="M.3 .3v8.800l7.200-4.400z" fill="#111"/></svg>
<svg style="left:692.8px;top:453px;" width="8" height="8" viewBox="0 0 8 8"><rect x="5.800" y=".3" width="1.500" height="7.200" fill="#111"/><path d="M.3 .3v7.200l5.500-3.600z" fill="#111"/></svg>
<svg style="left:775.3px;top:452.7px;" width="9" height="9" viewBox="0 0 9 9"><path d="M.6 3v-2.400h2.400M6 .6h2.400v2.400M8.400 6v2.400h-2.400M3 8.400h-2.400v-2.400" fill="none" stroke="#444" stroke-width=".9"/></svg>
<div style="left:411px;top:477.7px;width:18px;height:2.3px;background:#555;"></div>
<div style="left:296.7px;top:219px;width:2px;height:4px;border-right:3px solid transparent;"></div>
<svg style="left:296px;top:218px;" width="4" height="6" viewBox="0 0 4 6"><path d="M3.500 .5v5L.5 3z" fill="#666"/></svg>
<div style="left:297px;top:233px;width:2.2px;height:18px;background:#5a5a5a;"></div>
<svg style="left:11px;top:494px;" width="14" height="14" viewBox="0 0 14 14"><circle cx="7" cy="7" r="6.800" fill="#555"/><rect x="6" y="6" width="2" height="4.600" fill="#fff"/><circle cx="7" cy="3.900" r="1.200" fill="#fff"/><rect x="5.300" y="6" width="1.200" height="1" fill="#fff"/><rect x="5.300" y="9.800" width="3.400" height="1" fill="#fff"/></svg>
<svg style="left:42px;top:493px;" width="14" height="14" viewBox="0 0 14 14"><circle cx="7" cy="7" r="7" fill="#12b0e0"/><path d="M3.400 7.300l2.500 2.500 4.700-5" fill="none" stroke="#fff" stroke-width="1.800"/></svg>
<div style="left:74.2px;top:489px;width:1.8px;height:22.5px;background:#e0e0e0;"></div>
<div style="left:253px;top:489px;width:1.8px;height:22.5px;background:#e0e0e0;"></div>
<div style="left:722.8px;top:489.5px;width:1.8px;height:21.5px;background:#e0e0e0;"></div>
<svg style="left:93px;top:494px;" width="14" height="14" viewBox="0 0 14 14"><path d="M1.600 6.900A5.600 5.600 0 1 1 2.900 10.500" fill="none" stroke="#555" stroke-width="1.200"/><path d="M-.7 5.300h4.600L1.600 8.300z" fill="#555"/></svg>
<svg style="left:123.7px;top:492.5px;" width="17" height="16" viewBox="0 0 17 16"><path d="M1 8.500l6.500-3 6.500 3-6.500 3z" fill="#555"/><path d="M1 11.200l6.500 3 6.500-3" fill="none" stroke="#555" stroke-width="1"/><path d="M13.200 .5v5M10.700 3h5" stroke="#555" stroke-width="1"/></svg>
<svg style="left:158px;top:494px;" width="15" height="14" viewBox="0 0 15 14"><rect x=".5" y="1.500" width="6" height="11" fill="none" stroke="#aaa" stroke-width="1" stroke-dasharray="1 1"/><path d="M8.200 1.500h5.300v11h-5.300" fill="none" stroke="#555" stroke-width="1.300"/><rect x="6.400" y="0" width="1.500" height="14" fill="#555"/></svg>
<svg style="left:191px;top:496.2px;" width="11" height="10" viewBox="0 0 11 10"><g><path d="M0 3.400L4.400 0v6.800z" fill="#444"/><path d="M3.800 3.400h2.400a3 3 0 0 1 1.200 5.700" fill="none" stroke="#444" stroke-width="2.300"/></g></svg>
<svg style="left:223.3px;top:496.2px;" width="11" height="10" viewBox="0 0 11 10"><g transform="translate(11 0) scale(-1 1)"><path d="M0 3.400L4.400 0v6.800z" fill="#cfcfcf"/><path d="M3.800 3.400h2.400a3 3 0 0 1 1.200 5.700" fill="none" stroke="#cfcfcf" stroke-width="2.300"/></g></svg>
<svg style="left:273px;top:495px;" width="13" height="13" viewBox="0 0 13 13"><g fill="none" stroke="#555" stroke-width="1.100"><circle cx="2.400" cy="2.600" r="1.900"/><circle cx="2.400" cy="10.200" r="1.900"/><path d="M3.800 3.800l8.400 7.200M3.800 9l8.400-7.200"/></g></svg>
<svg style="left:307px;top:495px;" width="13" height="12" viewBox="0 0 13 12"><g fill="none" stroke="#555" stroke-width="1.150" stroke-linecap="round"><path d="M5.200 9.300l-1.400 1.400a2 2 0 0 1-2.800-2.800l2-2"/><path d="M7.600 2.400l1.400-1.400a2 2 0 0 1 2.800 2.800l-2 2"/><path d="M4.600 7.400l.5-.5M8 4l.5-.5M8.300 9l.6.600M2.800 2l.6.600"/></g></svg>
<svg style="left:342.6px;top:495.3px;" width="9" height="11" viewBox="0 0 9 11"><path d="M.8 2.400h7.400v7.600a.8.800 0 0 1-.8.800H1.600a.8.800 0 0 1-.8-.8z" fill="#666"/><rect x="0" y=".8" width="9" height="1.200" fill="#666"/><rect x="2.800" y="0" width="3.400" height="1.100" fill="#666"/></svg>
<div style="left:371.8px;top:501px;width:270px;height:1.6px;background:#bdbdbd;"></div>
<div style="left:371.8px;top:500.8px;width:39px;height:2.2px;background:#12b0e0;"></div>
<div style="left:404.9px;top:495.6px;width:12.4px;height:12.4px;background:#12b0e0;border-radius:50%;"></div>
<svg style="left:660px;top:494.5px;" width="14" height="13" viewBox="0 0 14 13"><rect x=".600" y="7.800" width="12.600" height="4.200" rx=".6" fill="#fff" stroke="#555" stroke-width="1"/><rect x=".600" y="7.800" width="4.800" height="4.200" fill="#555"/><path d="M12 3.400H4.500" stroke="#555" stroke-width="1.500"/><path d="M5.400 .8v5.200L1.600 3.400z" fill="#555"/></svg>
<svg style="left:691px;top:494.5px;" width="15" height="13" viewBox="0 0 15 13"><rect x=".600" y="7.800" width="12.600" height="4.200" rx=".6" fill="#fff" stroke="#555" stroke-width="1"/><rect x=".600" y="7.800" width="4.800" height="4.200" fill="#555"/><path d="M2 3.400h7.500" stroke="#555" stroke-width="1.500"/><path d="M8.600 .8v5.200l3.800-2.600z" fill="#555"/></svg>
<svg style="left:741.5px;top:494px;" width="15" height="14" viewBox="0 0 15 14"><path d="M7.100 2.900A5 5 0 1 0 12.100 7.900" fill="none" stroke="#12b0e0" stroke-width="1.600"/><circle cx="7.600" cy="1.500" r=".8" fill="#12b0e0"/><circle cx="13.500" cy="7.400" r=".8" fill="#12b0e0"/></svg>
<svg style="left:776px;top:493.5px;" width="15" height="15" viewBox="0 0 15 15"><g fill="none" stroke="#555" stroke-width=".9"><path d="M4.600 2.400l6 6.200M10.600 1.800l-6.600 6.600"/><circle cx="3.800" cy="1.800" r="1.100"/><circle cx="3.400" cy="8.800" r=".2"/></g><rect x=".900" y="10.200" width="12.800" height="3.800" rx=".6" fill="#fff" stroke="#555" stroke-width="1"/><rect x="5" y="10.200" width="4.600" height="3.800" fill="#555"/></svg>
<svg style="left:810px;top:495.5px;" width="14" height="11" viewBox="0 0 14 11"><path d="M6.900 0v11" stroke="#555" stroke-width="1"/><path d="M.4 5.500l3.400-2.400v1.700h1.800v1.400H3.800v1.700zM13.400 5.500L10 3.100v1.700H8.200v1.400H10v1.700z" fill="#555"/></svg>
<div style="left:833px;top:487.3px;width:5px;height:26.5px;background:#12b0e0;border-radius:2px 0 0 2px;"></div>
<div style="left:839px;top:0px;width:840px;height:903px;background:#fff;"></div>
<div style="left:839px;top:0px;width:840px;height:43px;background:#444;"></div>
<div style="left:839px;top:0px;width:56px;height:903px;background:#444;"></div>
<div style="left:839px;top:0px;width:2px;height:903px;background:#5e5e5e;"></div>
<div style="left:839px;top:0px;width:840px;height:2px;background:#f2f2f2;"></div>
<div style="left:895px;top:7px;width:135px;height:32px;background:#a8a8a8;"></div>
<div style="left:913.2px;top:8px;font-size:12px;color:#707070;line-height:32px;height:32px;white-space:nowrap;transform:scaleX(0.8711);transform-origin:0 0;">PROD</div>
<div style="left:1035px;top:7px;width:135px;height:32px;background:#a8a8a8;"></div>
<div style="left:1053.2px;top:8px;font-size:12px;color:#707070;line-height:32px;height:32px;white-space:nowrap;transform:scaleX(0.9208);transform-origin:0 0;">INT</div>
<div style="left:1174px;top:7px;width:135px;height:32px;background:#a8a8a8;"></div>
<div style="left:1192.2px;top:8px;font-size:12px;color:#707070;line-height:32px;height:32px;white-space:nowrap;transform:scaleX(0.8704);transform-origin:0 0;">TRANS</div>
<div style="left:1314px;top:7px;width:135px;height:36px;background:#fff;"></div>
<div style="left:1332px;top:8px;font-size:12px;color:#555;line-height:32px;height:32px;white-space:nowrap;transform:scaleX(0.93);transform-origin:0 0;">DEV</div>
<svg style="left:1415px;top:15px;" width="17" height="17" viewBox="0 0 17 17"><g transform="rotate(45 8.5 8.5)" fill="#555"><rect x="5.2" y="0.5" width="1.8" height="5" rx=".8"/><rect x="10" y="0.5" width="1.8" height="5" rx=".8"/><path d="M3.2 5.2h10.6v2.2a5.3 5.3 0 0 1-4 5.1V17h-2.6v-4.5a5.3 5.3 0 0 1-4-5.1z"/></g></svg>
<div style="left:1641px;top:9px;width:20px;height:4px;background:#fff;"></div>
<div style="left:1641px;top:15.5px;width:20px;height:4px;background:#fff;"></div>
<div style="left:1641px;top:22px;width:20px;height:4px;background:#fff;"></div>
<div style="left:846px;top:11px;width:45px;height:45px;background:#333;border-radius:50%;"></div>
<div style="left:860px;top:10.7px;font-size:13.3px;color:#12b0e0;line-height:45px;height:45px;white-space:nowrap;transform:scaleX(0.8768);transform-origin:0 0;">CP</div>
<div style="left:904px;top:51px;width:180px;height:849px;background:#e3e3e3;"></div>
<div style="left:904px;top:51px;width:180px;height:135px;background:#adadad;"></div>
<div style="left:913px;top:54px;font-size:11px;color:#fff;line-height:16px;height:16px;white-space:nowrap;transform:scaleX(0.9013);transform-origin:0 0;">GLOBAL CONFIGURATION</div>
<div style="left:913px;top:76px;font-size:11px;color:#fff;line-height:16px;height:16px;white-space:nowrap;transform:scaleX(0.8578);transform-origin:0 0;">GENERAL</div>
<div style="left:913px;top:99px;font-size:11px;color:#fff;line-height:16px;height:16px;white-space:nowrap;transform:scaleX(0.8752);transform-origin:0 0;">PUBLISH</div>
<div style="left:913px;top:121px;font-size:11px;color:#fff;line-height:16px;height:16px;white-space:nowrap;transform:scaleX(0.8181);transform-origin:0 0;">PROJECT</div>
<div style="left:913px;top:144px;font-size:11px;color:#fff;line-height:16px;height:16px;white-space:nowrap;transform:scaleX(0.9415);transform-origin:0 0;">MEDIA</div>
<div style="left:913px;top:166px;font-size:11px;color:#fff;line-height:16px;height:16px;white-space:nowrap;transform:scaleX(0.9062);transform-origin:0 0;">MOTION GRAPHICS</div>
<div style="left:904px;top:187px;width:180px;height:27px;background:#12b0e0;"></div>
<div style="left:931.2px;top:188px;font-size:12px;color:#fff;line-height:26px;height:26px;white-space:nowrap;transform:scaleX(0.8749);transform-origin:0 0;">GROUP</div>
<div style="left:931.2px;top:215px;font-size:12px;color:#333;line-height:26px;height:26px;white-space:nowrap;transform:scaleX(0.8916);transform-origin:0 0;">UPLOAD</div>
<div style="left:904px;top:241px;width:180px;height:22px;background:#adadad;"></div>
<div style="left:913px;top:241px;font-size:11px;color:#fff;line-height:22px;height:22px;white-space:nowrap;transform:scaleX(0.8566);transform-origin:0 0;">TEST TOOLKIT</div>
<div style="left:1102px;top:51px;width:568px;height:27px;background:#e2e2e2;"></div>
<div style="left:1111px;top:52px;font-size:12px;color:#555;line-height:26px;height:26px;white-space:nowrap;transform:scaleX(0.875);transform-origin:0 0;">VIDIEDITOR &gt; MOTION GRAPHICS &gt; GROUP</div>
<div style="left:1102px;top:87px;width:23px;height:24px;background:#1a9fb5;border-radius:2px;"></div>
<svg style="left:1107px;top:93px;" width="13" height="11" viewBox="0 0 13 11"><rect x="0" y="0" width="13" height="11" rx="1" fill="#fff"/><g fill="#1a9fb5"><rect x="1.2" y="2.6" width="3" height="1.8"/><rect x="5" y="2.6" width="3" height="1.8"/><rect x="8.8" y="2.6" width="3" height="1.8"/><rect x="1.2" y="5.2" width="3" height="1.8"/><rect x="5" y="5.2" width="3" height="1.8"/><rect x="8.8" y="5.2" width="3" height="1.8"/><rect x="1.2" y="7.8" width="3" height="1.8"/><rect x="5" y="7.8" width="3" height="1.8"/><rect x="8.8" y="7.8" width="3" height="1.8"/></g></svg>
<svg style="left:1139px;top:94px;" width="14" height="11" viewBox="0 0 14 11"><g fill="#222"><rect x="0" y="0" width="2" height="2"/><rect x="3" y="0" width="11" height="2"/><rect x="0" y="3" width="2" height="2"/><rect x="3" y="3" width="11" height="2"/><rect x="0" y="6" width="2" height="2"/><rect x="3" y="6" width="11" height="2"/><rect x="0" y="9" width="2" height="2"/><rect x="3" y="9" width="11" height="2"/></g></svg>
<div style="left:1102px;top:129px;width:568px;height:34px;background:#fafafa;border:1px solid #e6e6e6;"></div>
<div style="left:1114px;top:138px;font-size:13px;color:#222;line-height:18px;height:18px;white-space:nowrap;transform:scaleX(0.96);transform-origin:0 0;">Technical Nam...</div>
<div style="left:1252px;top:138px;font-size:13px;color:#222;line-height:18px;height:18px;white-space:nowrap;transform:scaleX(0.96);transform-origin:0 0;">Display Label</div>
<div style="left:1389px;top:138px;font-size:13px;color:#222;line-height:18px;height:18px;white-space:nowrap;transform:scaleX(0.96);transform-origin:0 0;">Status</div>
<div style="left:1527px;top:138px;font-size:13px;color:#222;line-height:18px;height:18px;white-space:nowrap;transform:scaleX(0.96);transform-origin:0 0;">Actions</div>
<svg style="left:1217px;top:139px;" width="11" height="12" viewBox="0 0 11 12"><path d="M0 0h11L6.7 5v6.5L4.3 9.5V5z" fill="#333"/></svg>
<svg style="left:1355px;top:139px;" width="11" height="12" viewBox="0 0 11 12"><path d="M0 0h11L6.7 5v6.5L4.3 9.5V5z" fill="#333"/></svg>
<svg style="left:1492px;top:139px;" width="11" height="12" viewBox="0 0 11 12"><path d="M0 0h11L6.7 5v6.5L4.3 9.5V5z" fill="#333"/></svg>
<div style="left:1102px;top:160px;width:568px;height:3px;background:#e9e9e9;"></div>
<div style="left:1102px;top:163px;width:550px;height:41px;background:#fff;"></div>
<div style="left:1114px;top:174px;font-size:11.5px;color:#222;line-height:20px;height:20px;white-space:nowrap;transform:scaleX(0.9);transform-origin:0 0;">Sport Examples</div>
<div style="left:1252px;top:174px;font-size:11.5px;color:#222;line-height:20px;height:20px;white-space:nowrap;transform:scaleX(0.9);transform-origin:0 0;">Sport Showcases</div>
<div style="left:1389px;top:174px;font-size:11.5px;color:#222;line-height:20px;height:20px;white-space:nowrap;transform:scaleX(0.9);transform-origin:0 0;">true</div>
<div style="left:1530px;top:170px;width:28px;height:27px;background:#fe9700;border-radius:2px;"></div>
<svg style="left:1537px;top:176px;" width="14" height="14" viewBox="0 0 14 14"><g fill="none" stroke="#fff" stroke-width="1.5"><path d="M10.5 7.5v3.2a1.3 1.3 0 0 1-1.3 1.3H2.8a1.3 1.3 0 0 1-1.3-1.3V4.3A1.3 1.3 0 0 1 2.8 3h5"/></g><path d="M5 9.5l.6-2.6 5.6-5.6 2 2-5.6 5.6z" fill="#fff"/></svg>
<div style="left:1565px;top:170px;width:26px;height:27px;background:#ff0000;border-radius:2px;"></div>
<svg style="left:1573px;top:176px;" width="11" height="14" viewBox="0 0 11 14"><g fill="none" stroke="#fff" stroke-width="1.3"><path d="M2.2 4v8a1 1 0 0 0 1 1h4.6a1 1 0 0 0 1-1V4"/><path d="M0.5 3.3h10"/><path d="M3.7 3V1.4h3.6V3"/><path d="M4 5.5v5.5M5.5 5.5v5.5M7 5.5v5.5" stroke-width="1"/></g></svg>
<div style="left:1598px;top:170px;width:28px;height:27px;background:#1496c0;border-radius:2px;"></div>
<svg style="left:1605.4px;top:177.5px;" width="14" height="14" viewBox="0 0 14 14"><g fill="#fff"><path d="M2.800 .4h2.800v1.600H2.800zM8.400 .4h2.800v1.600H8.400z"/><path d="M2.400 2.200h3.400v11H.3v-3.200q.6-4 2.100-7.800zM11.600 2.200H8.200v11h5.500v-3.200q-.6-4-2.100-7.800z"/><rect x="5.600" y="3.200" width="2.800" height="4.800" opacity=".9"/></g></svg>
<div style="left:1102px;top:204px;width:550px;height:41px;background:#f4f4f4;"></div>
<div style="left:1114px;top:215px;font-size:11.5px;color:#222;line-height:20px;height:20px;white-space:nowrap;transform:scaleX(0.9);transform-origin:0 0;">NDR Examples</div>
<div style="left:1252px;top:215px;font-size:11.5px;color:#222;line-height:20px;height:20px;white-space:nowrap;transform:scaleX(0.9);transform-origin:0 0;">NDR Showcases</div>
<div style="left:1389px;top:215px;font-size:11.5px;color:#222;line-height:20px;height:20px;white-space:nowrap;transform:scaleX(0.9);transform-origin:0 0;">true</div>
<div style="left:1530px;top:211px;width:28px;height:27px;background:#fe9700;border-radius:2px;"></div>
<svg style="left:1537px;top:217px;" width="14" height="14" viewBox="0 0 14 14"><g fill="none" stroke="#fff" stroke-width="1.5"><path d="M10.5 7.5v3.2a1.3 1.3 0 0 1-1.3 1.3H2.8a1.3 1.3 0 0 1-1.3-1.3V4.3A1.3 1.3 0 0 1 2.8 3h5"/></g><path d="M5 9.5l.6-2.6 5.6-5.6 2 2-5.6 5.6z" fill="#fff"/></svg>
<div style="left:1565px;top:211px;width:26px;height:27px;background:#ff0000;border-radius:2px;"></div>
<svg style="left:1573px;top:217px;" width="11" height="14" viewBox="0 0 11 14"><g fill="none" stroke="#fff" stroke-width="1.3"><path d="M2.2 4v8a1 1 0 0 0 1 1h4.6a1 1 0 0 0 1-1V4"/><path d="M0.5 3.3h10"/><path d="M3.7 3V1.4h3.6V3"/><path d="M4 5.5v5.5M5.5 5.5v5.5M7 5.5v5.5" stroke-width="1"/></g></svg>
<div style="left:1598px;top:211px;width:28px;height:27px;background:#1496c0;border-radius:2px;"></div>
<svg style="left:1605.4px;top:218.5px;" width="14" height="14" viewBox="0 0 14 14"><g fill="#fff"><path d="M2.800 .4h2.800v1.600H2.800zM8.400 .4h2.800v1.600H8.400z"/><path d="M2.400 2.200h3.400v11H.3v-3.200q.6-4 2.100-7.800zM11.600 2.200H8.200v11h5.500v-3.200q-.6-4-2.100-7.800z"/><rect x="5.600" y="3.200" width="2.800" height="4.800" opacity=".9"/></g></svg>
<div style="left:1102px;top:245px;width:550px;height:41px;background:#fff;"></div>
<div style="left:1114px;top:256px;font-size:11.5px;color:#222;line-height:20px;height:20px;white-space:nowrap;transform:scaleX(0.9);transform-origin:0 0;">General Showcases</div>
<div style="left:1252px;top:256px;font-size:11.5px;color:#222;line-height:20px;height:20px;white-space:nowrap;transform:scaleX(0.9);transform-origin:0 0;">Showcases</div>
<div style="left:1389px;top:256px;font-size:11.5px;color:#222;line-height:20px;height:20px;white-space:nowrap;transform:scaleX(0.9);transform-origin:0 0;">true</div>
<div style="left:1530px;top:252px;width:28px;height:27px;background:#fe9700;border-radius:2px;"></div>
<svg style="left:1537px;top:258px;" width="14" height="14" viewBox="0 0 14 14"><g fill="none" stroke="#fff" stroke-width="1.5"><path d="M10.5 7.5v3.2a1.3 1.3 0 0 1-1.3 1.3H2.8a1.3 1.3 0 0 1-1.3-1.3V4.3A1.3 1.3 0 0 1 2.8 3h5"/></g><path d="M5 9.5l.6-2.6 5.6-5.6 2 2-5.6 5.6z" fill="#fff"/></svg>
<div style="left:1565px;top:252px;width:26px;height:27px;background:#ff0000;border-radius:2px;"></div>
<svg style="left:1573px;top:258px;" width="11" height="14" viewBox="0 0 11 14"><g fill="none" stroke="#fff" stroke-width="1.3"><path d="M2.2 4v8a1 1 0 0 0 1 1h4.6a1 1 0 0 0 1-1V4"/><path d="M0.5 3.3h10"/><path d="M3.7 3V1.4h3.6V3"/><path d="M4 5.5v5.5M5.5 5.5v5.5M7 5.5v5.5" stroke-width="1"/></g></svg>
<div style="left:1598px;top:252px;width:28px;height:27px;background:#1496c0;border-radius:2px;"></div>
<svg style="left:1605.4px;top:259.5px;" width="14" height="14" viewBox="0 0 14 14"><g fill="#fff"><path d="M2.800 .4h2.800v1.600H2.800zM8.400 .4h2.800v1.600H8.400z"/><path d="M2.400 2.200h3.400v11H.3v-3.200q.6-4 2.100-7.800zM11.600 2.200H8.200v11h5.500v-3.200q-.6-4-2.100-7.800z"/><rect x="5.600" y="3.200" width="2.800" height="4.800" opacity=".9"/></g></svg>
<div style="left:1102px;top:286px;width:550px;height:41px;background:#f4f4f4;"></div>
<div style="left:1114px;top:297px;font-size:11.5px;color:#222;line-height:20px;height:20px;white-space:nowrap;transform:scaleX(0.9);transform-origin:0 0;">fontTest</div>
<div style="left:1252px;top:297px;font-size:11.5px;color:#222;line-height:20px;height:20px;white-space:nowrap;transform:scaleX(0.9);transform-origin:0 0;">Font Test</div>
<div style="left:1389px;top:297px;font-size:11.5px;color:#222;line-height:20px;height:20px;white-space:nowrap;transform:scaleX(0.9);transform-origin:0 0;">true</div>
<div style="left:1530px;top:293px;width:28px;height:27px;background:#fe9700;border-radius:2px;"></div>
<svg style="left:1537px;top:299px;" width="14" height="14" viewBox="0 0 14 14"><g fill="none" stroke="#fff" stroke-width="1.5"><path d="M10.5 7.5v3.2a1.3 1.3 0 0 1-1.3 1.3H2.8a1.3 1.3 0 0 1-1.3-1.3V4.3A1.3 1.3 0 0 1 2.8 3h5"/></g><path d="M5 9.5l.6-2.6 5.6-5.6 2 2-5.6 5.6z" fill="#fff"/></svg>
<div style="left:1565px;top:293px;width:26px;height:27px;background:#ff0000;border-radius:2px;"></div>
<svg style="left:1573px;top:299px;" width="11" height="14" viewBox="0 0 11 14"><g fill="none" stroke="#fff" stroke-width="1.3"><path d="M2.2 4v8a1 1 0 0 0 1 1h4.6a1 1 0 0 0 1-1V4"/><path d="M0.5 3.3h10"/><path d="M3.7 3V1.4h3.6V3"/><path d="M4 5.5v5.5M5.5 5.5v5.5M7 5.5v5.5" stroke-width="1"/></g></svg>
<div style="left:1598px;top:293px;width:28px;height:27px;background:#1496c0;border-radius:2px;"></div>
<svg style="left:1605.4px;top:300.5px;" width="14" height="14" viewBox="0 0 14 14"><g fill="#fff"><path d="M2.800 .4h2.800v1.600H2.800zM8.400 .4h2.800v1.600H8.400z"/><path d="M2.400 2.200h3.400v11H.3v-3.200q.6-4 2.100-7.800zM11.600 2.200H8.200v11h5.500v-3.200q-.6-4-2.100-7.800z"/><rect x="5.600" y="3.200" width="2.800" height="4.800" opacity=".9"/></g></svg>
<div style="left:1102px;top:327px;width:550px;height:41px;background:#fff;"></div>
<div style="left:1114px;top:338px;font-size:11.5px;color:#222;line-height:20px;height:20px;white-space:nowrap;transform:scaleX(0.9);transform-origin:0 0;">diff_framerate</div>
<div style="left:1252px;top:338px;font-size:11.5px;color:#222;line-height:20px;height:20px;white-space:nowrap;transform:scaleX(0.9);transform-origin:0 0;">Different framerate</div>
<div style="left:1389px;top:338px;font-size:11.5px;color:#222;line-height:20px;height:20px;white-space:nowrap;transform:scaleX(0.9);transform-origin:0 0;">true</div>
<div style="left:1530px;top:334px;width:28px;height:27px;background:#fe9700;border-radius:2px;"></div>
<svg style="left:1537px;top:340px;" width="14" height="14" viewBox="0 0 14 14"><g fill="none" stroke="#fff" stroke-width="1.5"><path d="M10.5 7.5v3.2a1.3 1.3 0 0 1-1.3 1.3H2.8a1.3 1.3 0 0 1-1.3-1.3V4.3A1.3 1.3 0 0 1 2.8 3h5"/></g><path d="M5 9.5l.6-2.6 5.6-5.6 2 2-5.6 5.6z" fill="#fff"/></svg>
<div style="left:1565px;top:334px;width:26px;height:27px;background:#ff0000;border-radius:2px;"></div>
<svg style="left:1573px;top:340px;" width="11" height="14" viewBox="0 0 11 14"><g fill="none" stroke="#fff" stroke-width="1.3"><path d="M2.2 4v8a1 1 0 0 0 1 1h4.6a1 1 0 0 0 1-1V4"/><path d="M0.5 3.3h10"/><path d="M3.7 3V1.4h3.6V3"/><path d="M4 5.5v5.5M5.5 5.5v5.5M7 5.5v5.5" stroke-width="1"/></g></svg>
<div style="left:1598px;top:334px;width:28px;height:27px;background:#1496c0;border-radius:2px;"></div>
<svg style="left:1605.4px;top:341.5px;" width="14" height="14" viewBox="0 0 14 14"><g fill="#fff"><path d="M2.800 .4h2.800v1.600H2.800zM8.400 .4h2.800v1.600H8.400z"/><path d="M2.400 2.200h3.400v11H.3v-3.200q.6-4 2.100-7.800zM11.600 2.200H8.200v11h5.500v-3.200q-.6-4-2.100-7.800z"/><rect x="5.600" y="3.200" width="2.800" height="4.800" opacity=".9"/></g></svg>
<div style="left:1102px;top:368px;width:550px;height:41px;background:#f4f4f4;"></div>
<div style="left:1114px;top:379px;font-size:11.5px;color:#222;line-height:20px;height:20px;white-space:nowrap;transform:scaleX(0.9);transform-origin:0 0;">Dev Test Cases</div>
<div style="left:1252px;top:379px;font-size:11.5px;color:#222;line-height:20px;height:20px;white-space:nowrap;transform:scaleX(0.9);transform-origin:0 0;">Development TryOut</div>
<div style="left:1389px;top:379px;font-size:11.5px;color:#222;line-height:20px;height:20px;white-space:nowrap;transform:scaleX(0.9);transform-origin:0 0;">true</div>
<div style="left:1530px;top:375px;width:28px;height:27px;background:#fe9700;border-radius:2px;"></div>
<svg style="left:1537px;top:381px;" width="14" height="14" viewBox="0 0 14 14"><g fill="none" stroke="#fff" stroke-width="1.5"><path d="M10.5 7.5v3.2a1.3 1.3 0 0 1-1.3 1.3H2.8a1.3 1.3 0 0 1-1.3-1.3V4.3A1.3 1.3 0 0 1 2.8 3h5"/></g><path d="M5 9.5l.6-2.6 5.6-5.6 2 2-5.6 5.6z" fill="#fff"/></svg>
<div style="left:1565px;top:375px;width:26px;height:27px;background:#ff0000;border-radius:2px;"></div>
<svg style="left:1573px;top:381px;" width="11" height="14" viewBox="0 0 11 14"><g fill="none" stroke="#fff" stroke-width="1.3"><path d="M2.2 4v8a1 1 0 0 0 1 1h4.6a1 1 0 0 0 1-1V4"/><path d="M0.5 3.3h10"/><path d="M3.7 3V1.4h3.6V3"/><path d="M4 5.5v5.5M5.5 5.5v5.5M7 5.5v5.5" stroke-width="1"/></g></svg>
<div style="left:1598px;top:375px;width:28px;height:27px;background:#1496c0;border-radius:2px;"></div>
<svg style="left:1605.4px;top:382.5px;" width="14" height="14" viewBox="0 0 14 14"><g fill="#fff"><path d="M2.800 .4h2.800v1.600H2.800zM8.400 .4h2.800v1.600H8.400z"/><path d="M2.400 2.200h3.400v11H.3v-3.200q.6-4 2.100-7.800zM11.600 2.200H8.200v11h5.500v-3.200q-.6-4-2.100-7.800z"/><rect x="5.600" y="3.200" width="2.800" height="4.800" opacity=".9"/></g></svg>
<div style="left:1652px;top:163px;width:17px;height:246px;background:#f0f0f0;"></div>
<svg style="left:1656px;top:170px;" width="9" height="5" viewBox="0 0 9 5"><path d="M0 5L4.5 0 9 5z" fill="#a3a3a3"/></svg>
<svg style="left:1656.3px;top:397.8px;" width="8" height="5" viewBox="0 0 8 5"><path d="M0 0L4 4.400 8 0z" fill="#a3a3a3"/></svg>
<div style="left:1240px;top:130px;width:1px;height:279px;background:#e3e3e3;"></div>
<div style="left:1377px;top:130px;width:1px;height:279px;background:#e3e3e3;"></div>
<div style="left:1515px;top:130px;width:1px;height:279px;background:#e3e3e3;"></div>
<div style="left:1652px;top:130px;width:1px;height:33px;background:#e3e3e3;"></div>
<div style="left:1102px;top:130px;width:1px;height:349px;background:#e6e6e6;"></div>
<div style="left:1669.5px;top:130px;width:1px;height:349px;background:#e6e6e6;"></div>
<div style="left:1102px;top:409px;width:569px;height:71px;background:#fafafa;border:1px solid #e6e6e6;"></div>
<svg style="left:1119px;top:427px;" width="8" height="8" viewBox="0 0 8 8"><rect x="0" y="0.5" width="1.4" height="7" fill="#333"/><path d="M7.5 0.5v7L2 4z" fill="#333"/></svg>
<svg style="left:1120px;top:454px;" width="7" height="8" viewBox="0 0 7 8"><path d="M6 0.5v7L0.5 4z" fill="#333"/></svg>
<svg style="left:1400px;top:427px;" width="7" height="8" viewBox="0 0 7 8"><path d="M1 0.5v7L6.5 4z" fill="#333"/></svg>
<svg style="left:1399px;top:454px;" width="8" height="8" viewBox="0 0 8 8"><rect x="6.6" y="0.5" width="1.4" height="7" fill="#333"/><path d="M0.5 0.5v7L6 4z" fill="#333"/></svg>
<div style="left:1173px;top:436px;font-size:13px;color:#333;line-height:20px;height:20px;white-space:nowrap;transform:scaleX(0.9);transform-origin:0 0;">Page</div>
<div style="left:1206px;top:431px;width:144px;height:27px;background:#fff;border:1px solid #e2e2e2;border-radius:2px;"></div>
<div style="left:1215px;top:435px;font-size:13px;color:#333;line-height:20px;height:20px;white-space:nowrap;">1</div>
<div style="left:1356px;top:436px;font-size:13px;color:#333;line-height:20px;height:20px;white-space:nowrap;transform:scaleX(0.9);transform-origin:0 0;">of 1</div>
<div style="left:1453px;top:435px;width:58px;height:19px;background:#fff;border:1px solid #222;border-radius:3px;"></div>
<div style="left:1458px;top:435px;font-size:13px;color:#111;line-height:19px;height:19px;white-space:nowrap;transform:scaleX(0.95);transform-origin:0 0;">10</div>
<svg style="left:1496px;top:441px;" width="10" height="7" viewBox="0 0 10 7"><path d="M1 1l4 4 4-4" fill="none" stroke="#111" stroke-width="1.8"/></svg>
<div style="left:1517px;top:429px;font-size:13px;color:#333;line-height:18px;height:18px;white-space:nowrap;transform:scaleX(0.95);transform-origin:0 0;">items per</div>
<div style="left:1517px;top:446px;font-size:13px;color:#333;line-height:18px;height:18px;white-space:nowrap;transform:scaleX(0.95);transform-origin:0 0;">page</div>
<div style="left:1590px;top:420px;font-size:13px;color:#333;line-height:18px;height:18px;white-space:nowrap;width:60px;text-align:right;">1 - 6</div>
<div style="left:1590px;top:437px;font-size:13px;color:#333;line-height:18px;height:18px;white-space:nowrap;width:60px;text-align:right;">of 6</div>
<div style="left:1590px;top:454px;font-size:13px;color:#333;line-height:18px;height:18px;white-space:nowrap;width:60px;text-align:right;">items</div>
<div style="left:1102px;top:489px;width:54px;height:26px;background:#14b4e4;border:1px solid #0f9dc8;border-radius:2px;"></div>
<div style="left:1124px;top:500px;width:10px;height:3px;background:#fff;"></div>
<div style="left:1127.5px;top:497px;width:3px;height:9px;background:#fff;"></div>
<svg style="left:839px;top:850px;" width="56" height="53" viewBox="0 0 56 53"><path d="M20.65 19.04 L20.66 15.68 L24.94 15.68 L24.95 19.04 L27.90 20.26 L30.28 17.89 L33.31 20.92 L30.94 23.30 L32.16 26.25 L35.52 26.26 L35.52 30.54 L32.16 30.55 L30.94 33.50 L33.31 35.88 L30.28 38.91 L27.90 36.54 L24.95 37.76 L24.94 41.12 L20.66 41.12 L20.65 37.76 L17.70 36.54 L15.32 38.91 L12.29 35.88 L14.66 33.50 L13.44 30.55 L10.08 30.54 L10.08 26.26 L13.44 26.25 L14.66 23.30 L12.29 20.92 L15.32 17.89 L17.70 20.26Z M17.90 28.40a4.9 4.9 0 1 0 9.8 0a4.9 4.9 0 1 0 -9.8 0Z" fill="#999" fill-rule="evenodd"/><path d="M38.61 13.58 L38.43 11.03 L42.17 11.03 L41.99 13.58 L43.71 14.58 L45.84 13.15 L47.70 16.38 L45.40 17.51 L45.40 19.49 L47.70 20.62 L45.84 23.85 L43.71 22.42 L41.99 23.42 L42.17 25.97 L38.43 25.97 L38.61 23.42 L36.89 22.42 L34.76 23.85 L32.90 20.62 L35.20 19.49 L35.20 17.51 L32.90 16.38 L34.76 13.15 L36.89 14.58Z M37.90 18.50a2.4 2.4 0 1 0 4.8 0a2.4 2.4 0 1 0 -4.8 0Z" fill="#999" fill-rule="evenodd"/><path d="M38.61 33.58 L38.43 31.03 L42.17 31.03 L41.99 33.58 L43.71 34.58 L45.84 33.15 L47.70 36.38 L45.40 37.51 L45.40 39.49 L47.70 40.62 L45.84 43.85 L43.71 42.42 L41.99 43.42 L42.17 45.97 L38.43 45.97 L38.61 43.42 L36.89 42.42 L34.76 43.85 L32.90 40.62 L35.20 39.49 L35.20 37.51 L32.90 36.38 L34.76 33.15 L36.89 34.58Z M37.90 38.50a2.4 2.4 0 1 0 4.8 0a2.4 2.4 0 1 0 -4.8 0Z" fill="#999" fill-rule="evenodd"/></svg>
<svg style="left:0px;top:0px;" width="1679" height="903" viewBox="0 0 1679 903"><g fill="none" stroke="#9c9c9c" stroke-width="1.1" stroke-linejoin="round" stroke-linecap="round"><path d="M869.4 72.8 L876.0 75.2 L869.4 77.6 L862.8 75.2Z M862.8 75.2 V83.0 L869.4 85.39999999999999 L876.0 83.0 V75.2 M869.4 77.6 V85.39999999999999"/><path d="M860 86.8 L867.7 89.6 L860 92.39999999999999 L852.3 89.6Z M852.3 89.6 V99.39999999999999 L860 102.19999999999999 L867.7 99.39999999999999 V89.6 M860 92.39999999999999 V102.19999999999999"/><path d="M879.5 87 L884.8 89.25 L879.5 91.5 L874.2 89.25Z M874.2 89.25 V95.55 L879.5 97.8 L884.8 95.55 V89.25 M879.5 91.5 V97.8"/><path d="M869.500 85.600v5 M867.800 91.200l1.700-.7 M869.500 90.500l2 .8h2.400"/></g></svg>
<svg style="left:0px;top:0px;" width="1679" height="903" viewBox="0 0 1679 903"><g fill="none" stroke="#9c9c9c" stroke-width="1.1" stroke-linejoin="round" stroke-linecap="round"><circle cx="861.8" cy="139.8" r="1.6"/><circle cx="874.6" cy="138" r="1.6"/><circle cx="853" cy="147" r="1.6"/><circle cx="852.8" cy="160" r="1.6"/><circle cx="883" cy="158" r="1.6"/><path d="M861.8 141.5v6.5 M873.5 139.2l-8 8.8 M854.6 147.3l4.4 1.2 M854 159l4.6-4 M881.5 157.3l-6.5-2.5"/><path d="M859 162.5v-14h16v8 M859 151h16 M859 162.5q0 1 1 1h5"/><path d="M868.5 161v-8q0-1.2 1.1-1.2t1.1 1.2v5l3.2 .8q1.4.4 1.2 1.8l-.6 4.2h-6.3z"/></g></svg>
<svg style="left:0px;top:0px;" width="1679" height="903" viewBox="0 0 1679 903"><g fill="none" stroke="#9c9c9c" stroke-width="1.1" stroke-linejoin="round" stroke-linecap="round"><circle cx="856.5" cy="204.3" r="4.2"/><path d="M860.5 206.5h11.5 M869.5 204l3 2.8-3 2.8"/><circle cx="863" cy="213.3" r="2.7" fill="#c4c4c4" stroke="#c4c4c4"/><path d="M866 213.3h17.5 M880 209.8l3.8 3.5-3.8 3.5"/><path d="M857.5 219.5l4.6 4.6-4.6 4.6-4.6-4.6z M861 221.5l2-2.7h15.5 M876 216l2.9 2.8-2.9 2.8"/></g></svg>
<svg style="left:0px;top:0px;" width="1679" height="903" viewBox="0 0 1679 903"><g fill="none" stroke="#8c8c8c" stroke-width="1.1" stroke-linejoin="round" stroke-linecap="round"><rect x="863.5" y="266.5" width="9" height="5.6" rx="1.5"/><rect x="853" y="282" width="9.6" height="5.8" rx="1.5"/><rect x="874" y="282" width="9.6" height="5.8" rx="1.5"/><path d="M862 271.5q-4.5 3-5.5 8.5 M874 271.5q4.500 3 5.5 8.500 M864.500 290q3.5 2 7.500 0 M864 266l6.500-4"/></g></svg>
<svg style="left:0px;top:0px;" width="1679" height="903" viewBox="0 0 1679 903"><g fill="none" stroke="#d2d2d2" stroke-width="1.1" stroke-linejoin="round" stroke-linecap="round"><rect x="851.500" y="332.500" width="21" height="21.500"/><path d="M856.500 332.500v21.500 M867.500 337v17 M856.500 337h11 M856.500 350h11"/><rect x="853" y="335.500" width="2.200" height="3"/><rect x="853" y="342" width="2.200" height="3"/><rect x="853" y="348.500" width="2.200" height="3"/><rect x="869" y="342" width="2.200" height="3"/><rect x="869" y="348.500" width="2.200" height="3"/><ellipse cx="878.300" cy="329.600" rx="2.400" ry="3.500" transform="rotate(20 878.3 329.6)"/><ellipse cx="878.500" cy="341" rx="2.400" ry="3.500" transform="rotate(-20 878.5 341)"/><path d="M876.500 332.500l-13 6.500q1-5 13-2.500z M876.500 338l-13-7q5-2.500 13 4z" fill="#d2d2d2" stroke-width=".6"/></g></svg>
<div style="left:891px;top:308px;width:4px;height:63px;background:#12b0e0;"></div>
<svg style="left:0px;top:0px;" width="1679" height="903" viewBox="0 0 1679 903"><g fill="none" stroke="#d2d2d2" stroke-width="1.1" stroke-linejoin="round" stroke-linecap="round"><path d="M861.800 409v-20.500l14.800 14-6.500 6"/><rect x="855.300" y="409.800" width="25.500" height="3.600" rx="1.800"/><circle cx="861.800" cy="411.600" r="4.600"/><circle cx="861.800" cy="411.600" r="2.200"/></g></svg>
<div style="left:2px;top:152px;width:233px;height:220px;border:3px solid #f63c42;"></div>
<div style="left:1098px;top:155.8px;width:579px;height:256.3px;border:3px solid #f63c42;"></div>
<svg style="left:0px;top:0px;" width="1679" height="903" viewBox="0 0 1679 903"><line x1="262.20" y1="261.52" x2="1084.10" y2="273.28" stroke="#f63c42" stroke-width="3.2"/><polygon points="254.00,261.40 263.13,266.03 263.26,257.03" fill="#f63c42"/><polygon points="1092.30,273.40 1083.04,277.77 1083.17,268.77" fill="#f63c42"/></svg>
</body></html>
